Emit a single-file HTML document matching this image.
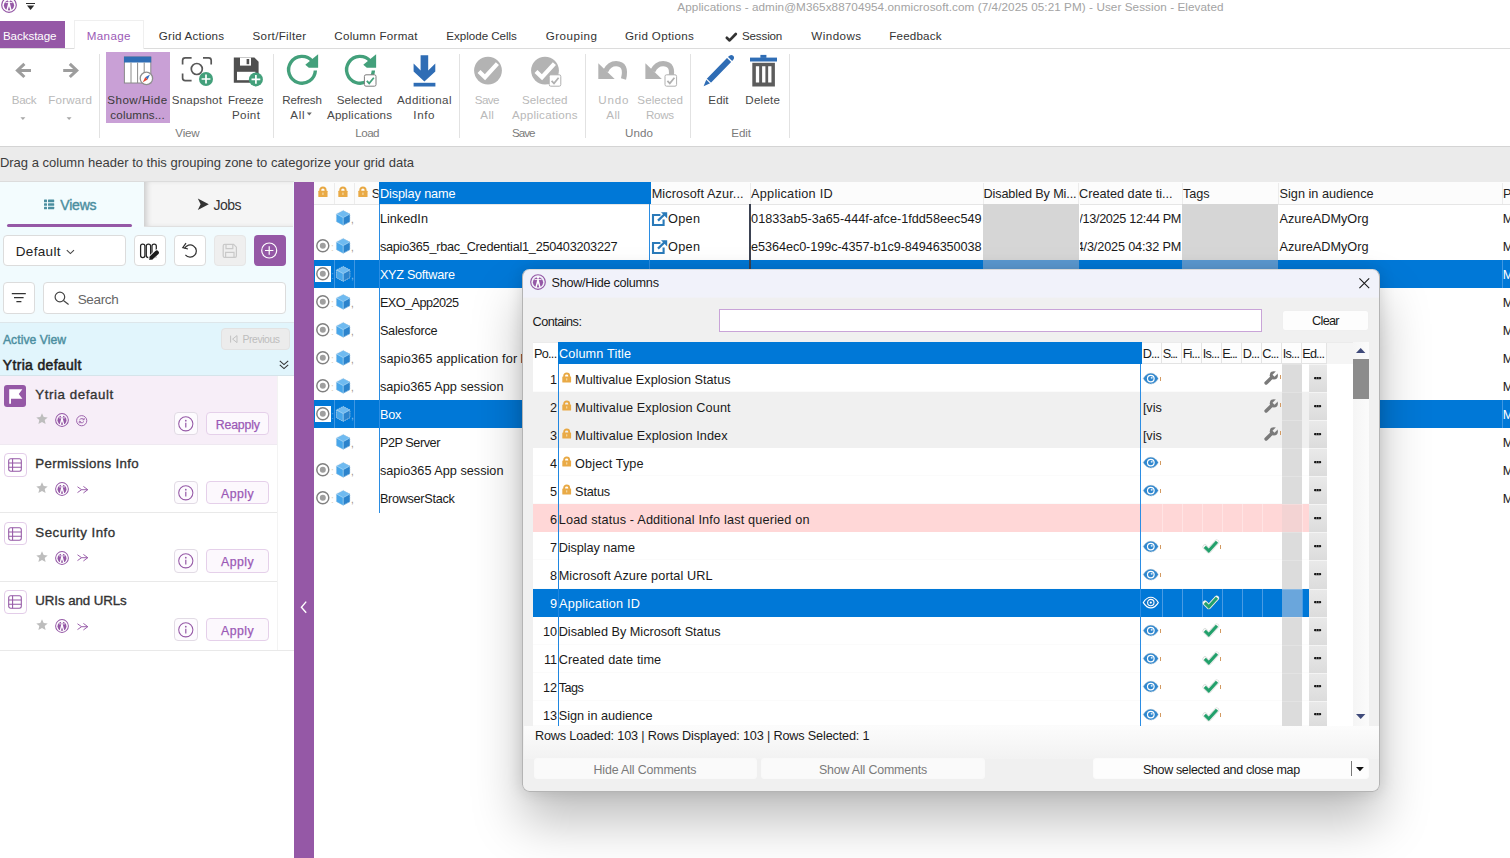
<!DOCTYPE html>
<html lang="en"><head><meta charset="utf-8"><title>sapio365 - Applications</title>
<style>

html,body{margin:0;padding:0;background:#fff;}
body{width:1510px;height:858px;overflow:hidden;font-family:'Liberation Sans',sans-serif;}
#app{position:relative;width:1510px;height:858px;overflow:hidden;background:#fff;}
#app div,#app span.t,#app svg{position:absolute;box-sizing:border-box;}
#app header,#app nav,#app section,#app aside,#app main{position:absolute;left:0;top:0;width:1510px;height:858px;display:block;}
span.t{white-space:pre;line-height:1;}
svg{overflow:visible;}

</style></head>
<body>
<div id="app">
<header id="titlebar">
<span class="t" style="top:1.00px;font-size:11.7px;color:#a3a3a3;letter-spacing:0.078px;left:677.36px;">Applications - admin@M365x88704954.onmicrosoft.com (7/4/2025 05:21 PM) - User Session - Elevated</span>
<svg style="left:0.6px;top:-3.2px" width="16" height="16" viewBox="0 0 32 32"><circle cx="16" cy="16" r="14.6" fill="none" stroke="#9558A6" stroke-width="2.3"/><circle cx="16" cy="16.6" r="10.2" fill="#9558A6"/><circle cx="16" cy="7.2" r="2.4" fill="#fff"/><rect x="9" y="10.4" width="14" height="1.7" fill="#fff"/><path d="M14.9 10 H17.1 L21.6 27.6 H18.9 L16 18.6 L13.1 27.6 H10.4 Z" fill="#fff"/></svg>
<svg style="left:26px;top:3px" width="10" height="8" viewBox="0 0 10 8"><rect x="0" y="0" width="9" height="1" fill="#2c2c2c"/><path d="M1 2.6 H8.2 L4.6 6.9 Z" fill="#2c2c2c"/></svg>
</header>
<nav id="ribbon-tabs">
<div style="left:0px;top:48px;width:1510px;height:1px;background:#dcdcdc;"></div>
<div style="left:0px;top:21px;width:65px;height:26.5px;background:#9558A6;"></div>
<div style="left:74px;top:20px;width:69.5px;height:29px;background:#fff;border:1px solid #efefef;border-bottom:none;"></div>
<span class="t" style="top:30.00px;font-size:11.6px;color:#fff;letter-spacing:-0.073px;left:2.96px;">Backstage</span>
<span class="t" style="top:30.00px;font-size:11.6px;color:#9b59b6;letter-spacing:0.371px;left:86.76px;">Manage</span>
<span class="t" style="top:30.00px;font-size:11.6px;color:#333;letter-spacing:0.259px;left:158.76px;">Grid Actions</span>
<span class="t" style="top:30.00px;font-size:11.6px;color:#333;letter-spacing:0.331px;left:252.56px;">Sort/Filter</span>
<span class="t" style="top:30.00px;font-size:11.6px;color:#333;letter-spacing:0.272px;left:334.36px;">Column Format</span>
<span class="t" style="top:30.00px;font-size:11.6px;color:#333;letter-spacing:-0.028px;left:446.36px;">Explode Cells</span>
<span class="t" style="top:30.00px;font-size:11.6px;color:#333;letter-spacing:0.494px;left:545.76px;">Grouping</span>
<span class="t" style="top:30.00px;font-size:11.6px;color:#333;letter-spacing:0.351px;left:624.96px;">Grid Options</span>
<span class="t" style="top:30.00px;font-size:11.6px;color:#333;letter-spacing:-0.148px;left:741.96px;">Session</span>
<span class="t" style="top:30.00px;font-size:11.6px;color:#333;letter-spacing:0.452px;left:811.36px;">Windows</span>
<span class="t" style="top:30.00px;font-size:11.6px;color:#333;letter-spacing:0.177px;left:889.36px;">Feedback</span>
<svg style="left:725px;top:32px" width="13" height="11" viewBox="0 0 13 11"><path d="M1.8 5.8 L4.6 8.4 L10.8 2" fill="none" stroke="#333" stroke-width="2.7" stroke-linecap="round" stroke-linejoin="round"/></svg>
</nav>
<section id="ribbon">
<div style="left:0px;top:145.5px;width:1510px;height:1px;background:#d4d4d4;"></div>
<div style="left:99px;top:54px;width:1px;height:84px;background:#e2e2e2;"></div>
<div style="left:273px;top:54px;width:1px;height:84px;background:#e2e2e2;"></div>
<div style="left:458.5px;top:54px;width:1px;height:84px;background:#e2e2e2;"></div>
<div style="left:584.5px;top:54px;width:1px;height:84px;background:#e2e2e2;"></div>
<div style="left:690px;top:54px;width:1px;height:84px;background:#e2e2e2;"></div>
<div style="left:789px;top:54px;width:1px;height:84px;background:#e2e2e2;"></div>
<div style="left:105.6px;top:52.4px;width:64px;height:70.4px;background:#c9a0d6;"></div>
<span class="t" style="top:94.00px;font-size:11.6px;color:#b9b9b9;letter-spacing:-0.340px;left:11.76px;">Back</span>
<span class="t" style="top:94.00px;font-size:11.6px;color:#b9b9b9;letter-spacing:0.171px;left:48.36px;">Forward</span>
<span class="t" style="top:94.00px;font-size:11.6px;color:#3a3a3a;letter-spacing:0.460px;left:107.36px;">Show/Hide</span>
<span class="t" style="top:109.00px;font-size:11.6px;color:#3a3a3a;letter-spacing:0.168px;left:110.36px;">columns...</span>
<span class="t" style="top:94.00px;font-size:11.6px;color:#484848;letter-spacing:0.166px;left:171.76px;">Snapshot</span>
<span class="t" style="top:94.00px;font-size:11.6px;color:#484848;letter-spacing:-0.107px;left:227.96px;">Freeze</span>
<span class="t" style="top:109.00px;font-size:11.6px;color:#484848;letter-spacing:0.381px;left:231.96px;">Point</span>
<span class="t" style="top:127.00px;font-size:11.6px;color:#7a7a7a;letter-spacing:-0.254px;left:175.36px;">View</span>
<span class="t" style="top:94.00px;font-size:11.6px;color:#484848;letter-spacing:-0.175px;left:282.36px;">Refresh</span>
<span class="t" style="top:109.00px;font-size:11.6px;color:#484848;letter-spacing:0.635px;left:290.36px;">All</span>
<span class="t" style="top:94.00px;font-size:11.6px;color:#484848;letter-spacing:0.034px;left:336.76px;">Selected</span>
<span class="t" style="top:109.00px;font-size:11.6px;color:#484848;letter-spacing:0.240px;left:326.96px;">Applications</span>
<span class="t" style="top:94.00px;font-size:11.6px;color:#484848;letter-spacing:0.404px;left:396.96px;">Additional</span>
<span class="t" style="top:109.00px;font-size:11.6px;color:#484848;letter-spacing:0.605px;left:413.36px;">Info</span>
<span class="t" style="top:127.00px;font-size:11.6px;color:#7a7a7a;letter-spacing:-0.546px;left:355.36px;">Load</span>
<span class="t" style="top:94.00px;font-size:11.6px;color:#b9b9b9;letter-spacing:-0.559px;left:474.76px;">Save</span>
<span class="t" style="top:109.00px;font-size:11.6px;color:#b9b9b9;letter-spacing:0.335px;left:480.36px;">All</span>
<span class="t" style="top:94.00px;font-size:11.6px;color:#b9b9b9;letter-spacing:0.062px;left:521.96px;">Selected</span>
<span class="t" style="top:109.00px;font-size:11.6px;color:#b9b9b9;letter-spacing:0.277px;left:511.96px;">Applications</span>
<span class="t" style="top:127.00px;font-size:11.6px;color:#7a7a7a;letter-spacing:-0.959px;left:511.96px;">Save</span>
<span class="t" style="top:94.00px;font-size:11.6px;color:#b9b9b9;letter-spacing:0.814px;left:598.36px;">Undo</span>
<span class="t" style="top:109.00px;font-size:11.6px;color:#b9b9b9;letter-spacing:0.335px;left:606.36px;">All</span>
<span class="t" style="top:94.00px;font-size:11.6px;color:#b9b9b9;letter-spacing:0.062px;left:637.36px;">Selected</span>
<span class="t" style="top:109.00px;font-size:11.6px;color:#b9b9b9;letter-spacing:-0.280px;left:645.96px;">Rows</span>
<span class="t" style="top:127.00px;font-size:11.6px;color:#7a7a7a;letter-spacing:0.080px;left:624.96px;">Undo</span>
<span class="t" style="top:94.00px;font-size:11.6px;color:#484848;letter-spacing:0.059px;left:708.36px;">Edit</span>
<span class="t" style="top:94.00px;font-size:11.6px;color:#484848;letter-spacing:0.209px;left:745.36px;">Delete</span>
<span class="t" style="top:127.00px;font-size:11.6px;color:#7a7a7a;letter-spacing:-0.141px;left:731.36px;">Edit</span>
<svg style="left:0;top:0" width="800" height="146" viewBox="0 0 800 146"><path d="M31 70.4 H18.6 M24.4 63.8 L17.4 70.4 L24.4 77" fill="none" stroke="#9d9d9d" stroke-width="3"/><path d="M63.2 70.4 H75.6 M69.8 63.8 L76.8 70.4 L69.8 77" fill="none" stroke="#9d9d9d" stroke-width="3"/><path d="M20.4 117.2 h5 l-2.5 2.8z M66.6 117.2 h5 l-2.5 2.8z" fill="#a8a8a8"/><path d="M306.8 112.6 h5 l-2.5 2.9z" fill="#666"/><rect x="124.4" y="57" width="26.4" height="26" fill="#fff" stroke="#8a8a8a" stroke-width="1"/><rect x="124" y="56.6" width="27.2" height="5.9" fill="#2f6db5"/><path d="M131 62.5 V83 M137.6 62.5 V83 M144.2 62.5 V83" stroke="#8a8a8a" stroke-width="1" fill="none"/><circle cx="146.4" cy="78.4" r="6.2" fill="#fff" stroke="#8f8f8f" stroke-width="1.3"/><path d="M150 74.6 L147.6 79.6 L145.2 77.2 Z" fill="#3b6fc0"/><path d="M142.8 82.2 L145.2 77.2 L147.6 79.6 Z" fill="#e0452e"/><path d="M182.6 64.4 V60.4 Q182.6 57.8 185.2 57.8 H191.6 M203 57.8 H208.6 Q211.2 57.8 211.2 60.4 V64.4 M182.6 73.6 V78 Q182.6 80.6 185.2 80.6 H191.6" fill="none" stroke="#585858" stroke-width="1.7"/><circle cx="196.8" cy="69" r="5.5" fill="none" stroke="#585858" stroke-width="1.7"/><circle cx="206" cy="79" r="7" fill="#43a07b"/><path d="M201.6 79 H210.4 M206 74.6 V83.4" stroke="#fff" stroke-width="1.7" fill="none"/><path d="M233.8 57.6 H254.4 L258.6 61.8 V82.8 H233.8 Z" fill="#4f4f4f"/><rect x="240" y="57.6" width="11" height="8" fill="#fff"/><rect x="246.6" y="59" width="2.6" height="5.2" fill="#4f4f4f"/><rect x="237" y="71.8" width="18.4" height="8.4" fill="#fff"/><circle cx="255.9" cy="79.4" r="7" fill="#43a07b"/><path d="M251.5 79.4 H260.3 M255.9 75.0 V83.80000000000001" stroke="#fff" stroke-width="1.7" fill="none"/><path d="M312.26 61.19 A13.4 13.4 0 1 0 315.38 70.50" fill="none" stroke="#43a07b" stroke-width="3.4"/><path d="M318.10 54.20 V67.80 H308.80 L305.30 64.70 Z" fill="#43a07b"/><path d="M370.26 61.19 A13.4 13.4 0 1 0 373.38 70.50" fill="none" stroke="#43a07b" stroke-width="3.4"/><path d="M376.10 54.20 V67.80 H366.80 L363.30 64.70 Z" fill="#43a07b"/><rect x="364.4" y="74.8" width="11.6" height="11.4" rx="1.6" fill="#fff" stroke="#7d7d7d" stroke-width="1"/><path d="M366.79999999999995 80.8 L369.2 83.39999999999999 L373.79999999999995 77.8" fill="none" stroke="#43a07b" stroke-width="1.7"/><path d="M420.6 55.2 H428.2 V70.6 L435.3 63.6 V71.6 L424.4 81.4 L413.6 71.6 V63.6 L420.6 70.6 Z" fill="#2f6db5"/><rect x="413.6" y="82.8" width="21.8" height="3.7" fill="#2f6db5"/><circle cx="488" cy="70.6" r="13.9" fill="#b3b3b3"/><path d="M479 71.4 L485 77.2 L497.4 63.6" fill="none" stroke="#fff" stroke-width="4.2"/><circle cx="545" cy="70.6" r="13.9" fill="#b3b3b3"/><path d="M536 71.4 L542 77.2 L554.4 63.6" fill="none" stroke="#fff" stroke-width="4.2"/><rect x="549.2" y="74.8" width="11.6" height="11.4" rx="1.6" fill="#fff" stroke="#b0b0b0" stroke-width="1"/><path d="M551.6 80.8 L554.0 83.39999999999999 L558.6 77.8" fill="none" stroke="#b0b0b0" stroke-width="1.7"/><path d="M623.5 79.0 Q627.3 63.800000000000004 616.0999999999999 63.6 Q609.3 63.6 605.6999999999999 71.0" fill="none" stroke="#b3b3b3" stroke-width="5.2"/><path d="M598.3 63.2 V79.0 H614.6999999999999 Z" fill="#b3b3b3"/><path d="M670.6 79.0 Q674.4 63.800000000000004 663.1999999999999 63.6 Q656.4 63.6 652.8 71.0" fill="none" stroke="#b3b3b3" stroke-width="5.2"/><path d="M645.4 63.2 V79.0 H661.8 Z" fill="#b3b3b3"/><rect x="665" y="74.8" width="11.6" height="11.4" rx="1.6" fill="#fff" stroke="#b0b0b0" stroke-width="1"/><path d="M667.4 80.8 L669.8 83.39999999999999 L674.4 77.8" fill="none" stroke="#b0b0b0" stroke-width="1.7"/><g transform="translate(703.6 86.2) rotate(-45.8)"><path d="M0 0 L7.2 -2.9 H38.6 Q42.4 -2.9 42.4 0 Q42.4 2.9 38.6 2.9 H7.2 Z" fill="#2f6db5"/><rect x="6.4" y="-3.6" width="1.3" height="7.2" fill="#fff"/><rect x="36.6" y="-3.6" width="1.4" height="7.2" fill="#fff"/></g><rect x="750" y="57.6" width="27" height="3.9" fill="#2f6db5"/><rect x="760.4" y="54.9" width="6" height="3" fill="#2f6db5"/><rect x="752.3" y="62.8" width="22.6" height="23.7" fill="#5c5c5c"/><path d="M757.5 66.2 V82.4 M763.75 66.2 V82.4 M769.8 66.2 V82.4" stroke="#fff" stroke-width="3.3" fill="none"/></svg>
</section>
<section id="grouping-zone">
<div style="left:0px;top:146.5px;width:1510px;height:35.1px;background:#ebebeb;"></div>
<span class="t" style="top:156.00px;font-size:13px;color:#3c3c3c;left:-0.11px;">Drag a column header to this grouping zone to categorize your grid data</span>
</section>
<aside id="views-panel">
<div style="left:0px;top:181.5px;width:293.5px;height:676.5px;background:#f1fbfe;"></div>
<div style="left:0px;top:322px;width:293.5px;height:536px;background:#fff;"></div>
<div style="left:143.8px;top:181.5px;width:149.7px;height:45.1px;background:#f5f5f5;border-bottom:1px solid #e0e0e0;box-shadow:inset 5px 0 6px -3px rgba(0,0,0,.2);"></div>
<div style="left:0px;top:181.5px;width:143.8px;height:45.1px;background:#f3fcfe;border-top-right-radius:3px;"></div>
<div style="left:7px;top:223.7px;width:124.6px;height:3.3px;background:#9558A6;border-radius:2px;"></div>
<div style="left:0px;top:181px;width:293.5px;height:1px;background:#dcdcdc;"></div>
<span class="t" style="top:198.00px;font-size:14px;color:#4B8EA0;letter-spacing:-0.173px;-webkit-text-stroke:0.4px #4B8EA0;left:60.23px;">Views</span>
<span class="t" style="top:198.00px;font-size:14px;color:#333;letter-spacing:-0.559px;left:213.53px;">Jobs</span>
<div style="left:3.3px;top:234.6px;width:122.4px;height:31.1px;background:#fff;border:1px solid #dcdcdc;border-radius:4px;"></div>
<span class="t" style="top:245.00px;font-size:13.5px;color:#222;letter-spacing:0.361px;left:15.66px;">Default</span>
<div style="left:133.8px;top:234.6px;width:31.8px;height:31.1px;background:#fff;border:1px solid #dcdcdc;border-radius:4px;"></div>
<div style="left:173.8px;top:234.6px;width:31.8px;height:31.1px;background:#fff;border:1px solid #dcdcdc;border-radius:4px;"></div>
<div style="left:213.8px;top:234.6px;width:31.8px;height:31.1px;background:#efefef;border:1px solid #e6e6e6;border-radius:4px;"></div>
<div style="left:253.7px;top:234.6px;width:31.9px;height:31.1px;background:#9558A6;border-radius:4px;"></div>
<div style="left:3.2px;top:282.4px;width:31.6px;height:31.4px;background:#fff;border:1px solid #dcdcdc;border-radius:4px;"></div>
<div style="left:42.8px;top:282.4px;width:243px;height:31.4px;background:#fff;border:1px solid #dcdcdc;border-radius:4px;"></div>
<span class="t" style="top:293.00px;font-size:13.5px;color:#666;letter-spacing:-0.326px;left:77.66px;">Search</span>
<div style="left:0px;top:322px;width:293.5px;height:53.6px;background:#e1f5fc;border-top:1px solid #dde6ea;border-bottom:1px solid #d5e4ea;"></div>
<span class="t" style="top:334.00px;font-size:12.2px;color:#4B8EA0;letter-spacing:0.044px;-webkit-text-stroke:0.4px #4B8EA0;left:2.93px;">Active View</span>
<div style="left:221.2px;top:327.6px;width:68.4px;height:22.8px;background:#ececec;border:1px solid #e2e2e2;border-radius:4px;"></div>
<span class="t" style="top:335.00px;font-size:10.4px;color:#bdbdbd;letter-spacing:-0.400px;left:242.43px;">Previous</span>
<span class="t" style="top:358.00px;font-size:14px;color:#1e1e1e;letter-spacing:0.323px;-webkit-text-stroke:0.55px #1e1e1e;left:2.83px;">Ytria default</span>
<div style="left:277px;top:375.6px;width:1px;height:274.6px;background:#f3f3f3;"></div>
<div style="left:0px;top:375.5px;width:277px;height:68.65px;background:#f7eef8;"></div>
<div style="left:0px;top:443.65px;width:277px;height:1px;background:#efe9f1;"></div>
<div style="left:4px;top:384.5px;width:22.4px;height:22.2px;background:#9558A6;border-radius:3px;"></div>
<svg style="left:4px;top:384.5px" width="22.4" height="22.2" viewBox="0 0 22.4 22.2"><path d="M5.2 4.2 H18.4 L14.8 9 L18.4 13.8 H7 V18.8 H5.2 Z" fill="#fff"/></svg>
<span class="t" style="top:388.00px;font-size:13.3px;color:#333;letter-spacing:0.572px;-webkit-text-stroke:0.35px #333;left:35.37px;">Ytria default</span>
<svg style="left:36.4px;top:413.3px" width="12" height="11.4" viewBox="0 0 12 11.4"><path d="M6 .3 L7.7 4 L11.7 4.4 L8.7 7.1 L9.6 11 L6 9 L2.4 11 L3.3 7.1 L.3 4.4 L4.3 4 Z" fill="#bdbdbd"/></svg>
<svg style="left:55px;top:413.2px" width="14" height="14" viewBox="0 0 32 32"><circle cx="16" cy="16" r="14.6" fill="none" stroke="#9558A6" stroke-width="2.3"/><circle cx="16" cy="16.6" r="10.2" fill="#9558A6"/><circle cx="16" cy="7.2" r="2.4" fill="#fff"/><rect x="9" y="10.4" width="14" height="1.7" fill="#fff"/><path d="M14.9 10 H17.1 L21.6 27.6 H18.9 L16 18.6 L13.1 27.6 H10.4 Z" fill="#fff"/></svg>
<svg style="left:76.4px;top:414.7px" width="11.4" height="11.4" viewBox="0 0 11.4 11.4"><circle cx="5.7" cy="5.7" r="5.1" fill="none" stroke="#9558A6" stroke-width=".9"/><path d="M3.4 5 Q4.6 3.2 6.6 3.6 L7.8 4.4 M8 6.4 Q6.8 8.2 4.8 7.8 L3.6 7" fill="none" stroke="#9558A6" stroke-width=".9"/><path d="M8.2 3 V4.8 H6.4 M3.2 8.4 V6.6 H5" fill="none" stroke="#9558A6" stroke-width=".8"/></svg>
<div style="left:173.6px;top:412.1px;width:24px;height:23.2px;background:#fdfbfe;border:1px solid #e2dbe5;border-radius:4px;"></div>
<svg style="left:177.6px;top:415.9px" width="15.6" height="15.6" viewBox="0 0 15.6 15.6"><circle cx="7.8" cy="7.8" r="7.1" fill="none" stroke="#9558A6" stroke-width="1.05"/><circle cx="7.8" cy="4.7" r=".85" fill="#9558A6"/><path d="M7.8 6.8 V11.4" stroke="#9558A6" stroke-width="1.2"/></svg>
<div style="left:205.8px;top:412.1px;width:63.6px;height:23.2px;background:#fcf8fd;border:1px solid #e5d0ea;border-radius:4px;"></div>
<span class="t" style="top:419.00px;font-size:12.3px;color:#9b59b6;letter-spacing:-0.149px;-webkit-text-stroke:0.25px #9b59b6;left:215.72px;">Reapply</span>
<div style="left:0px;top:512.3px;width:277px;height:1px;background:#e9e9e9;"></div>
<div style="left:3.6px;top:453.05px;width:23.4px;height:23.6px;background:#fff;border:1px solid #e3cde9;border-radius:4px;"></div>
<svg style="left:8.1px;top:457.95px" width="14" height="14" viewBox="0 0 14 14"><rect x=".7" y=".7" width="12.6" height="12.6" rx="2" fill="none" stroke="#9558A6" stroke-width="1.05"/><path d="M.7 5 H13.3 M.7 9.2 H13.3 M4.6 .7 V13.3" stroke="#9558A6" stroke-width="1.05" fill="none"/></svg>
<span class="t" style="top:457.00px;font-size:13.3px;color:#333;letter-spacing:0.329px;-webkit-text-stroke:0.35px #333;left:35.37px;">Permissions Info</span>
<svg style="left:36.4px;top:481.95px" width="12" height="11.4" viewBox="0 0 12 11.4"><path d="M6 .3 L7.7 4 L11.7 4.4 L8.7 7.1 L9.6 11 L6 9 L2.4 11 L3.3 7.1 L.3 4.4 L4.3 4 Z" fill="#bdbdbd"/></svg>
<svg style="left:55px;top:481.85px" width="14" height="14" viewBox="0 0 32 32"><circle cx="16" cy="16" r="14.6" fill="none" stroke="#9558A6" stroke-width="2.3"/><circle cx="16" cy="16.6" r="10.2" fill="#9558A6"/><circle cx="16" cy="7.2" r="2.4" fill="#fff"/><rect x="9" y="10.4" width="14" height="1.7" fill="#fff"/><path d="M14.9 10 H17.1 L21.6 27.6 H18.9 L16 18.6 L13.1 27.6 H10.4 Z" fill="#fff"/></svg>
<svg style="left:77px;top:485.75px" width="11.6" height="7.4" viewBox="0 0 11.6 7.4"><path d="M.5 .8 L4.6 3.7 L.5 6.6 M4.6 3.7 H10.8 M6.4 .4 L10.8 3.7 L6.4 7" fill="none" stroke="#9558A6" stroke-width=".95"/></svg>
<div style="left:173.6px;top:480.75px;width:24px;height:23.2px;background:#fdfbfe;border:1px solid #e2dbe5;border-radius:4px;"></div>
<svg style="left:177.6px;top:484.55px" width="15.6" height="15.6" viewBox="0 0 15.6 15.6"><circle cx="7.8" cy="7.8" r="7.1" fill="none" stroke="#9558A6" stroke-width="1.05"/><circle cx="7.8" cy="4.7" r=".85" fill="#9558A6"/><path d="M7.8 6.8 V11.4" stroke="#9558A6" stroke-width="1.2"/></svg>
<div style="left:205.8px;top:480.75px;width:63.6px;height:23.2px;background:#fcf8fd;border:1px solid #e5d0ea;border-radius:4px;"></div>
<span class="t" style="top:488.00px;font-size:12.3px;color:#9b59b6;letter-spacing:0.416px;-webkit-text-stroke:0.25px #9b59b6;left:221.12px;">Apply</span>
<div style="left:0px;top:580.95px;width:277px;height:1px;background:#e9e9e9;"></div>
<div style="left:3.6px;top:521.7px;width:23.4px;height:23.6px;background:#fff;border:1px solid #e3cde9;border-radius:4px;"></div>
<svg style="left:8.1px;top:526.6px" width="14" height="14" viewBox="0 0 14 14"><rect x=".7" y=".7" width="12.6" height="12.6" rx="2" fill="none" stroke="#9558A6" stroke-width="1.05"/><path d="M.7 5 H13.3 M.7 9.2 H13.3 M4.6 .7 V13.3" stroke="#9558A6" stroke-width="1.05" fill="none"/></svg>
<span class="t" style="top:526.00px;font-size:13.3px;color:#333;letter-spacing:0.494px;-webkit-text-stroke:0.35px #333;left:35.37px;">Security Info</span>
<svg style="left:36.4px;top:550.6px" width="12" height="11.4" viewBox="0 0 12 11.4"><path d="M6 .3 L7.7 4 L11.7 4.4 L8.7 7.1 L9.6 11 L6 9 L2.4 11 L3.3 7.1 L.3 4.4 L4.3 4 Z" fill="#bdbdbd"/></svg>
<svg style="left:55px;top:550.5px" width="14" height="14" viewBox="0 0 32 32"><circle cx="16" cy="16" r="14.6" fill="none" stroke="#9558A6" stroke-width="2.3"/><circle cx="16" cy="16.6" r="10.2" fill="#9558A6"/><circle cx="16" cy="7.2" r="2.4" fill="#fff"/><rect x="9" y="10.4" width="14" height="1.7" fill="#fff"/><path d="M14.9 10 H17.1 L21.6 27.6 H18.9 L16 18.6 L13.1 27.6 H10.4 Z" fill="#fff"/></svg>
<svg style="left:77px;top:554.4px" width="11.6" height="7.4" viewBox="0 0 11.6 7.4"><path d="M.5 .8 L4.6 3.7 L.5 6.6 M4.6 3.7 H10.8 M6.4 .4 L10.8 3.7 L6.4 7" fill="none" stroke="#9558A6" stroke-width=".95"/></svg>
<div style="left:173.6px;top:549.4px;width:24px;height:23.2px;background:#fdfbfe;border:1px solid #e2dbe5;border-radius:4px;"></div>
<svg style="left:177.6px;top:553.2px" width="15.6" height="15.6" viewBox="0 0 15.6 15.6"><circle cx="7.8" cy="7.8" r="7.1" fill="none" stroke="#9558A6" stroke-width="1.05"/><circle cx="7.8" cy="4.7" r=".85" fill="#9558A6"/><path d="M7.8 6.8 V11.4" stroke="#9558A6" stroke-width="1.2"/></svg>
<div style="left:205.8px;top:549.4px;width:63.6px;height:23.2px;background:#fcf8fd;border:1px solid #e5d0ea;border-radius:4px;"></div>
<span class="t" style="top:556.00px;font-size:12.3px;color:#9b59b6;letter-spacing:0.416px;-webkit-text-stroke:0.25px #9b59b6;left:221.12px;">Apply</span>
<div style="left:0px;top:649.6px;width:293.5px;height:1px;background:#e9e9e9;"></div>
<div style="left:3.6px;top:590.35px;width:23.4px;height:23.6px;background:#fff;border:1px solid #e3cde9;border-radius:4px;"></div>
<svg style="left:8.1px;top:595.25px" width="14" height="14" viewBox="0 0 14 14"><rect x=".7" y=".7" width="12.6" height="12.6" rx="2" fill="none" stroke="#9558A6" stroke-width="1.05"/><path d="M.7 5 H13.3 M.7 9.2 H13.3 M4.6 .7 V13.3" stroke="#9558A6" stroke-width="1.05" fill="none"/></svg>
<span class="t" style="top:594.00px;font-size:13.3px;color:#333;letter-spacing:-0.095px;-webkit-text-stroke:0.35px #333;left:35.37px;">URIs and URLs</span>
<svg style="left:36.4px;top:619.25px" width="12" height="11.4" viewBox="0 0 12 11.4"><path d="M6 .3 L7.7 4 L11.7 4.4 L8.7 7.1 L9.6 11 L6 9 L2.4 11 L3.3 7.1 L.3 4.4 L4.3 4 Z" fill="#bdbdbd"/></svg>
<svg style="left:55px;top:619.15px" width="14" height="14" viewBox="0 0 32 32"><circle cx="16" cy="16" r="14.6" fill="none" stroke="#9558A6" stroke-width="2.3"/><circle cx="16" cy="16.6" r="10.2" fill="#9558A6"/><circle cx="16" cy="7.2" r="2.4" fill="#fff"/><rect x="9" y="10.4" width="14" height="1.7" fill="#fff"/><path d="M14.9 10 H17.1 L21.6 27.6 H18.9 L16 18.6 L13.1 27.6 H10.4 Z" fill="#fff"/></svg>
<svg style="left:77px;top:623.05px" width="11.6" height="7.4" viewBox="0 0 11.6 7.4"><path d="M.5 .8 L4.6 3.7 L.5 6.6 M4.6 3.7 H10.8 M6.4 .4 L10.8 3.7 L6.4 7" fill="none" stroke="#9558A6" stroke-width=".95"/></svg>
<div style="left:173.6px;top:618.05px;width:24px;height:23.2px;background:#fdfbfe;border:1px solid #e2dbe5;border-radius:4px;"></div>
<svg style="left:177.6px;top:621.85px" width="15.6" height="15.6" viewBox="0 0 15.6 15.6"><circle cx="7.8" cy="7.8" r="7.1" fill="none" stroke="#9558A6" stroke-width="1.05"/><circle cx="7.8" cy="4.7" r=".85" fill="#9558A6"/><path d="M7.8 6.8 V11.4" stroke="#9558A6" stroke-width="1.2"/></svg>
<div style="left:205.8px;top:618.05px;width:63.6px;height:23.2px;background:#fcf8fd;border:1px solid #e5d0ea;border-radius:4px;"></div>
<span class="t" style="top:625.00px;font-size:12.3px;color:#9b59b6;letter-spacing:0.416px;-webkit-text-stroke:0.25px #9b59b6;left:221.12px;">Apply</span>
<svg style="left:0;top:0" width="294" height="380" viewBox="0 0 294 380"><rect x="44" y="199.60" width="3" height="2.6" rx=".5" fill="#4B8EA0"/><rect x="48" y="199.60" width="6.2" height="2.6" rx=".5" fill="#4B8EA0"/><rect x="44" y="203.15" width="3" height="2.6" rx=".5" fill="#4B8EA0"/><rect x="48" y="203.15" width="6.2" height="2.6" rx=".5" fill="#4B8EA0"/><rect x="44" y="206.70" width="3" height="2.6" rx=".5" fill="#4B8EA0"/><rect x="48" y="206.70" width="6.2" height="2.6" rx=".5" fill="#4B8EA0"/><path d="M197.8 198.4 L208.8 204.2 L197.8 210 L200.6 204.2 Z" fill="#333"/><path d="M66.8 250.2 L70.4 253.6 L74 250.2" fill="none" stroke="#444" stroke-width="1.1"/><rect x="140.6" y="244" width="4.3" height="13.6" rx="2.1" fill="none" stroke="#222" stroke-width="1.25"/><rect x="146.3" y="244" width="4.3" height="13.6" rx="2.1" fill="none" stroke="#222" stroke-width="1.25"/><rect x="152.0" y="244" width="4.3" height="13.6" rx="2.1" fill="none" stroke="#222" stroke-width="1.25"/><path d="M151.4 257.6 L157 252.4" stroke="#fff" stroke-width="6" stroke-linecap="round"/><path d="M151.8 257.2 L156.8 252.6" stroke="#1c1c1c" stroke-width="4.2" stroke-linecap="round"/><path d="M149.2 260 L149.9 256.2 L153 259.2 Z" fill="#1c1c1c"/><path d="M184.6 248.6 A6.1 6.1 0 1 1 185.4 254.8" fill="none" stroke="#333" stroke-width="1.2"/><path d="M186 243.2 L182.8 247.6 L188 249" fill="none" stroke="#333" stroke-width="1.2"/><path d="M224.6 244.4 H233.6 L236.4 247.2 V256 Q236.4 257.4 235 257.4 H224.6 Q223.2 257.4 223.2 256 V245.8 Q223.2 244.4 224.6 244.4 Z" fill="none" stroke="#c9c9c9" stroke-width="1.2"/><path d="M226 244.6 V248.6 H232.8 V244.6 M225.6 257.2 V252.4 H234 V257.2" fill="none" stroke="#c9c9c9" stroke-width="1.2"/><circle cx="269.2" cy="250.5" r="7.5" fill="none" stroke="#fff" stroke-width="1.2"/><path d="M265 250.5 H273.4 M269.2 246.3 V254.7" stroke="#fff" stroke-width="1.2" fill="none"/><path d="M11.8 293.6 H25.8 M14 297.6 H23.6 M16.4 301.6 H21.4" stroke="#333" stroke-width="1.2" fill="none"/><circle cx="59.9" cy="297" r="4.8" fill="none" stroke="#444" stroke-width="1.2"/><path d="M63.4 300.6 L68.6 304.6" stroke="#444" stroke-width="1.2"/><path d="M230.6 335.6 V342.6 M237 335.6 L232.6 339.1 L237 342.6 Z" fill="none" stroke="#c2c2c2" stroke-width="1"/><path d="M279.8 360.8 L284 364.6 L288.2 360.8 M279.8 364.8 L284 368.6 L288.2 364.8" fill="none" stroke="#333" stroke-width="1.1"/></svg>
</aside>
<section id="splitter">
<div style="left:293.5px;top:181.6px;width:20.5px;height:676.4px;background:#9558A6;"></div>
<svg style="left:299.5px;top:600px" width="8" height="14" viewBox="0 0 8 14"><path d="M6.2 1.6 L1.4 7.2 L6.2 12.8" fill="none" stroke="#fff" stroke-width="1.4"/></svg>
</section>
<main id="grid">
<div style="left:314px;top:181.6px;width:1196px;height:676.4px;background:#fff;"></div>
<div style="left:314px;top:181.6px;width:1196px;height:23.1px;background:#fcfcfc;border-bottom:1px solid #e6e6e6;"></div>
<div style="left:334px;top:182.6px;width:1px;height:21px;background:#ececec;"></div>
<div style="left:354.4px;top:182.6px;width:1px;height:21px;background:#ececec;"></div>
<div style="left:750px;top:182.6px;width:1px;height:21px;background:#ececec;"></div>
<div style="left:983px;top:182.6px;width:1px;height:21px;background:#ececec;"></div>
<div style="left:1078px;top:182.6px;width:1px;height:21px;background:#ececec;"></div>
<div style="left:1182px;top:182.6px;width:1px;height:21px;background:#ececec;"></div>
<div style="left:1278.4px;top:182.6px;width:1px;height:21px;background:#ececec;"></div>
<div style="left:1502px;top:182.6px;width:1px;height:21px;background:#ececec;"></div>
<div style="left:379px;top:181.6px;width:271.6px;height:22.3px;background:#0078D7;"></div>
<svg style="left:317.8px;top:186px" width="9.87" height="11.13" viewBox="0 0 9.4 10.6"><path d="M2.2 5 V3.9 Q2.2 1.5 4.7 1.5 Q7.2 1.5 7.2 3.9 V5" fill="none" stroke="#e8a843" stroke-width="1.9"/><rect x=".3" y="4.6" width="8.8" height="5.8" rx=".5" fill="#e9aa46"/><rect x="4.1" y="6.3" width="1.2" height="2.2" fill="#f6d9a6"/></svg>
<svg style="left:337.8px;top:186px" width="9.87" height="11.13" viewBox="0 0 9.4 10.6"><path d="M2.2 5 V3.9 Q2.2 1.5 4.7 1.5 Q7.2 1.5 7.2 3.9 V5" fill="none" stroke="#e8a843" stroke-width="1.9"/><rect x=".3" y="4.6" width="8.8" height="5.8" rx=".5" fill="#e9aa46"/><rect x="4.1" y="6.3" width="1.2" height="2.2" fill="#f6d9a6"/></svg>
<svg style="left:357.8px;top:186px" width="9.87" height="11.13" viewBox="0 0 9.4 10.6"><path d="M2.2 5 V3.9 Q2.2 1.5 4.7 1.5 Q7.2 1.5 7.2 3.9 V5" fill="none" stroke="#e8a843" stroke-width="1.9"/><rect x=".3" y="4.6" width="8.8" height="5.8" rx=".5" fill="#e9aa46"/><rect x="4.1" y="6.3" width="1.2" height="2.2" fill="#f6d9a6"/></svg>
<span class="t" style="top:188.00px;font-size:12.7px;color:#222;left:371.70px;clip-path:inset(0 1.6px 0 0);">S</span>
<span class="t" style="top:188.00px;font-size:12.7px;color:#fff;letter-spacing:-0.110px;left:379.90px;">Display name</span>
<span class="t" style="top:188.00px;font-size:12.7px;color:#222;letter-spacing:0.101px;left:651.70px;">Microsoft Azur...</span>
<span class="t" style="top:188.00px;font-size:12.7px;color:#222;letter-spacing:0.245px;left:751.10px;">Application ID</span>
<span class="t" style="top:188.00px;font-size:12.7px;color:#222;letter-spacing:-0.132px;left:983.50px;">Disabled By Mi...</span>
<span class="t" style="top:188.00px;font-size:12.7px;color:#222;letter-spacing:-0.020px;left:1079.10px;">Created date ti...</span>
<span class="t" style="top:188.00px;font-size:12.7px;color:#222;letter-spacing:-0.047px;left:1182.90px;">Tags</span>
<span class="t" style="top:188.00px;font-size:12.7px;color:#222;letter-spacing:0.016px;left:1279.50px;">Sign in audience</span>
<span class="t" style="top:188.00px;font-size:12.7px;color:#222;left:1502.90px;">P</span>
<svg style="left:335.8px;top:210.1px" width="14.4" height="15.8" viewBox="0 0 14.4 15.8"><path d="M7.2 .4 L14 3.9 V11.7 L7.2 15.4 L.4 11.7 V3.9 Z" fill="#9fd0f3"/><path d="M7.2 .6 L13.8 4 L7.2 7.6 L.6 4 Z" fill="#6fbaf0"/><path d="M.5 4 L7.2 7.6 V15.3 L.5 11.7 Z" fill="#48a6ea"/><path d="M13.9 4 L7.2 7.6 V15.3 L13.9 11.7 Z" fill="#2c83cc"/><path d="M.6 4 L7.2 7.6 L13.8 4 M7.2 7.6 V15.2" fill="none" stroke="#a9d8f7" stroke-width=".7"/><path d="M7.2 .4 L14 3.9 V11.7 L7.2 15.4 L.4 11.7 V3.9 Z" fill="none" stroke="#b3cfe3" stroke-width=".7" stroke-dasharray="1.3 .9"/></svg>
<span class="t" style="top:215.00px;font-size:10px;color:#9a8f80;left:351.05px;">,</span>
<span class="t" style="top:213.00px;font-size:12.7px;color:#1a1a1a;letter-spacing:0.014px;left:379.90px;">LinkedIn</span>
<span class="t" style="top:213.00px;font-size:12.7px;color:#1a1a1a;left:1502.70px;">M</span>
<svg style="left:652px;top:211.7px" width="15.6" height="14" viewBox="0 0 15.6 14"><path d="M8.4 3 H1 V13 H11.6 V7.4" fill="none" stroke="#2a7ab9" stroke-width="2.1"/><path d="M6 8.6 L13.6 1.2" stroke="#2a7ab9" stroke-width="2.3"/><path d="M9 .2 H15.2 V6.4 Z" fill="#2a7ab9"/></svg>
<span class="t" style="top:213.00px;font-size:12.7px;color:#1a1a1a;letter-spacing:0.274px;left:668.10px;">Open</span>
<span class="t" style="top:213.00px;font-size:12.7px;color:#1a1a1a;letter-spacing:-0.006px;left:751.10px;">01833ab5-3a65-444f-afce-1fdd58eec549</span>
<span class="t" style="top:213.00px;font-size:12.7px;color:#1a1a1a;letter-spacing:-0.318px;right:328.95px;">1/13/2025 12:44 PM</span>
<span class="t" style="top:213.00px;font-size:12.7px;color:#1a1a1a;letter-spacing:0.021px;left:1279.50px;">AzureADMyOrg</span>
<div style="left:983px;top:204.1px;width:95.6px;height:28px;background:#d6d6d6;"></div>
<div style="left:1182.4px;top:204.1px;width:96px;height:28px;background:#d6d6d6;"></div>
<svg style="left:316.4px;top:239px" width="13.6" height="13.6" viewBox="0 0 13.6 13.6"><circle cx="6.8" cy="6.8" r="6" fill="#fff" stroke="#808080" stroke-width="1.45"/><circle cx="6.8" cy="6.8" r="3" fill="#9f9f9f"/></svg>
<span class="t" style="top:243.00px;font-size:10px;color:#d9cdbb;left:331.05px;">:</span>
<svg style="left:335.8px;top:238.1px" width="14.4" height="15.8" viewBox="0 0 14.4 15.8"><path d="M7.2 .4 L14 3.9 V11.7 L7.2 15.4 L.4 11.7 V3.9 Z" fill="#9fd0f3"/><path d="M7.2 .6 L13.8 4 L7.2 7.6 L.6 4 Z" fill="#6fbaf0"/><path d="M.5 4 L7.2 7.6 V15.3 L.5 11.7 Z" fill="#48a6ea"/><path d="M13.9 4 L7.2 7.6 V15.3 L13.9 11.7 Z" fill="#2c83cc"/><path d="M.6 4 L7.2 7.6 L13.8 4 M7.2 7.6 V15.2" fill="none" stroke="#a9d8f7" stroke-width=".7"/><path d="M7.2 .4 L14 3.9 V11.7 L7.2 15.4 L.4 11.7 V3.9 Z" fill="none" stroke="#b3cfe3" stroke-width=".7" stroke-dasharray="1.3 .9"/></svg>
<span class="t" style="top:243.00px;font-size:10px;color:#9a8f80;left:351.05px;">,</span>
<span class="t" style="top:241.00px;font-size:12.7px;color:#1a1a1a;letter-spacing:-0.250px;left:379.90px;">sapio365_rbac_Credential1_250403203227</span>
<span class="t" style="top:241.00px;font-size:12.7px;color:#1a1a1a;left:1502.70px;">M</span>
<svg style="left:652px;top:239.7px" width="15.6" height="14" viewBox="0 0 15.6 14"><path d="M8.4 3 H1 V13 H11.6 V7.4" fill="none" stroke="#2a7ab9" stroke-width="2.1"/><path d="M6 8.6 L13.6 1.2" stroke="#2a7ab9" stroke-width="2.3"/><path d="M9 .2 H15.2 V6.4 Z" fill="#2a7ab9"/></svg>
<span class="t" style="top:241.00px;font-size:12.7px;color:#1a1a1a;letter-spacing:0.274px;left:668.10px;">Open</span>
<span class="t" style="top:241.00px;font-size:12.7px;color:#1a1a1a;letter-spacing:-0.090px;left:751.10px;">e5364ec0-199c-4357-b1c9-84946350038</span>
<span class="t" style="top:241.00px;font-size:12.7px;color:#1a1a1a;letter-spacing:-0.159px;right:328.79px;">4/3/2025 04:32 PM</span>
<span class="t" style="top:241.00px;font-size:12.7px;color:#1a1a1a;letter-spacing:0.021px;left:1279.50px;">AzureADMyOrg</span>
<div style="left:983px;top:232.1px;width:95.6px;height:28px;background:#d6d6d6;"></div>
<div style="left:1182.4px;top:232.1px;width:96px;height:28px;background:#d6d6d6;"></div>
<div style="left:314px;top:260.1px;width:1196px;height:28px;background:#0078D7;"></div>
<div style="left:334px;top:260.1px;width:1px;height:28px;background:#3f97e2;"></div>
<div style="left:354.4px;top:260.1px;width:1px;height:28px;background:#3f97e2;"></div>
<div style="left:1502px;top:260.1px;width:1px;height:28px;background:#3f97e2;"></div>
<div style="left:315.2px;top:265.7px;width:16.2px;height:16.4px;background:#fff;"></div>
<svg style="left:316.4px;top:267px" width="13.6" height="13.6" viewBox="0 0 13.6 13.6"><circle cx="6.8" cy="6.8" r="6" fill="#fff" stroke="#808080" stroke-width="1.45"/><circle cx="6.8" cy="6.8" r="3" fill="#9f9f9f"/></svg>
<span class="t" style="top:271.00px;font-size:10px;color:#5aa4e6;left:331.05px;">:</span>
<svg style="left:335.8px;top:266.1px" width="14.4" height="15.8" viewBox="0 0 14.4 15.8"><path d="M7.2 .4 L14 3.9 V11.7 L7.2 15.4 L.4 11.7 V3.9 Z" fill="#9fd0f3"/><path d="M7.2 .6 L13.8 4 L7.2 7.6 L.6 4 Z" fill="#6fbaf0"/><path d="M.5 4 L7.2 7.6 V15.3 L.5 11.7 Z" fill="#48a6ea"/><path d="M13.9 4 L7.2 7.6 V15.3 L13.9 11.7 Z" fill="#2c83cc"/><path d="M.6 4 L7.2 7.6 L13.8 4 M7.2 7.6 V15.2" fill="none" stroke="#a9d8f7" stroke-width=".7"/><path d="M7.2 .4 L14 3.9 V11.7 L7.2 15.4 L.4 11.7 V3.9 Z" fill="none" stroke="#b3cfe3" stroke-width=".7" stroke-dasharray="1.3 .9"/></svg>
<span class="t" style="top:271.00px;font-size:10px;color:#8cc0ee;left:351.05px;">,</span>
<span class="t" style="top:269.00px;font-size:12.7px;color:#fff;letter-spacing:-0.292px;left:379.90px;">XYZ Software</span>
<span class="t" style="top:269.00px;font-size:12.7px;color:#fff;left:1502.70px;">M</span>
<div style="left:983px;top:260.1px;width:95.6px;height:28px;background:#5c9ad2;"></div>
<div style="left:1182.4px;top:260.1px;width:96px;height:28px;background:#5c9ad2;"></div>
<svg style="left:316.4px;top:295px" width="13.6" height="13.6" viewBox="0 0 13.6 13.6"><circle cx="6.8" cy="6.8" r="6" fill="#fff" stroke="#808080" stroke-width="1.45"/><circle cx="6.8" cy="6.8" r="3" fill="#9f9f9f"/></svg>
<span class="t" style="top:299.00px;font-size:10px;color:#d9cdbb;left:331.05px;">:</span>
<svg style="left:335.8px;top:294.1px" width="14.4" height="15.8" viewBox="0 0 14.4 15.8"><path d="M7.2 .4 L14 3.9 V11.7 L7.2 15.4 L.4 11.7 V3.9 Z" fill="#9fd0f3"/><path d="M7.2 .6 L13.8 4 L7.2 7.6 L.6 4 Z" fill="#6fbaf0"/><path d="M.5 4 L7.2 7.6 V15.3 L.5 11.7 Z" fill="#48a6ea"/><path d="M13.9 4 L7.2 7.6 V15.3 L13.9 11.7 Z" fill="#2c83cc"/><path d="M.6 4 L7.2 7.6 L13.8 4 M7.2 7.6 V15.2" fill="none" stroke="#a9d8f7" stroke-width=".7"/><path d="M7.2 .4 L14 3.9 V11.7 L7.2 15.4 L.4 11.7 V3.9 Z" fill="none" stroke="#b3cfe3" stroke-width=".7" stroke-dasharray="1.3 .9"/></svg>
<span class="t" style="top:299.00px;font-size:10px;color:#9a8f80;left:351.05px;">,</span>
<span class="t" style="top:297.00px;font-size:12.7px;color:#1a1a1a;letter-spacing:-0.539px;left:379.90px;">EXO_App2025</span>
<span class="t" style="top:297.00px;font-size:12.7px;color:#1a1a1a;left:1502.70px;">M</span>
<svg style="left:316.4px;top:323px" width="13.6" height="13.6" viewBox="0 0 13.6 13.6"><circle cx="6.8" cy="6.8" r="6" fill="#fff" stroke="#808080" stroke-width="1.45"/><circle cx="6.8" cy="6.8" r="3" fill="#9f9f9f"/></svg>
<span class="t" style="top:327.00px;font-size:10px;color:#d9cdbb;left:331.05px;">:</span>
<svg style="left:335.8px;top:322.1px" width="14.4" height="15.8" viewBox="0 0 14.4 15.8"><path d="M7.2 .4 L14 3.9 V11.7 L7.2 15.4 L.4 11.7 V3.9 Z" fill="#9fd0f3"/><path d="M7.2 .6 L13.8 4 L7.2 7.6 L.6 4 Z" fill="#6fbaf0"/><path d="M.5 4 L7.2 7.6 V15.3 L.5 11.7 Z" fill="#48a6ea"/><path d="M13.9 4 L7.2 7.6 V15.3 L13.9 11.7 Z" fill="#2c83cc"/><path d="M.6 4 L7.2 7.6 L13.8 4 M7.2 7.6 V15.2" fill="none" stroke="#a9d8f7" stroke-width=".7"/><path d="M7.2 .4 L14 3.9 V11.7 L7.2 15.4 L.4 11.7 V3.9 Z" fill="none" stroke="#b3cfe3" stroke-width=".7" stroke-dasharray="1.3 .9"/></svg>
<span class="t" style="top:327.00px;font-size:10px;color:#9a8f80;left:351.05px;">,</span>
<span class="t" style="top:325.00px;font-size:12.7px;color:#1a1a1a;letter-spacing:-0.254px;left:379.90px;">Salesforce</span>
<span class="t" style="top:325.00px;font-size:12.7px;color:#1a1a1a;left:1502.70px;">M</span>
<svg style="left:316.4px;top:351px" width="13.6" height="13.6" viewBox="0 0 13.6 13.6"><circle cx="6.8" cy="6.8" r="6" fill="#fff" stroke="#808080" stroke-width="1.45"/><circle cx="6.8" cy="6.8" r="3" fill="#9f9f9f"/></svg>
<span class="t" style="top:355.00px;font-size:10px;color:#d9cdbb;left:331.05px;">:</span>
<svg style="left:335.8px;top:350.1px" width="14.4" height="15.8" viewBox="0 0 14.4 15.8"><path d="M7.2 .4 L14 3.9 V11.7 L7.2 15.4 L.4 11.7 V3.9 Z" fill="#9fd0f3"/><path d="M7.2 .6 L13.8 4 L7.2 7.6 L.6 4 Z" fill="#6fbaf0"/><path d="M.5 4 L7.2 7.6 V15.3 L.5 11.7 Z" fill="#48a6ea"/><path d="M13.9 4 L7.2 7.6 V15.3 L13.9 11.7 Z" fill="#2c83cc"/><path d="M.6 4 L7.2 7.6 L13.8 4 M7.2 7.6 V15.2" fill="none" stroke="#a9d8f7" stroke-width=".7"/><path d="M7.2 .4 L14 3.9 V11.7 L7.2 15.4 L.4 11.7 V3.9 Z" fill="none" stroke="#b3cfe3" stroke-width=".7" stroke-dasharray="1.3 .9"/></svg>
<span class="t" style="top:355.00px;font-size:10px;color:#9a8f80;left:351.05px;">,</span>
<span class="t" style="top:353.00px;font-size:12.7px;color:#1a1a1a;letter-spacing:0.141px;left:379.90px;">sapio365 application for</span>
<span class="t" style="top:353.00px;font-size:12.7px;color:#1a1a1a;left:1502.70px;">M</span>
<span class="t" style="top:353.00px;font-size:12.7px;color:#1a1a1a;left:520.20px;">M</span>
<svg style="left:316.4px;top:379px" width="13.6" height="13.6" viewBox="0 0 13.6 13.6"><circle cx="6.8" cy="6.8" r="6" fill="#fff" stroke="#808080" stroke-width="1.45"/><circle cx="6.8" cy="6.8" r="3" fill="#9f9f9f"/></svg>
<span class="t" style="top:383.00px;font-size:10px;color:#d9cdbb;left:331.05px;">:</span>
<svg style="left:335.8px;top:378.1px" width="14.4" height="15.8" viewBox="0 0 14.4 15.8"><path d="M7.2 .4 L14 3.9 V11.7 L7.2 15.4 L.4 11.7 V3.9 Z" fill="#9fd0f3"/><path d="M7.2 .6 L13.8 4 L7.2 7.6 L.6 4 Z" fill="#6fbaf0"/><path d="M.5 4 L7.2 7.6 V15.3 L.5 11.7 Z" fill="#48a6ea"/><path d="M13.9 4 L7.2 7.6 V15.3 L13.9 11.7 Z" fill="#2c83cc"/><path d="M.6 4 L7.2 7.6 L13.8 4 M7.2 7.6 V15.2" fill="none" stroke="#a9d8f7" stroke-width=".7"/><path d="M7.2 .4 L14 3.9 V11.7 L7.2 15.4 L.4 11.7 V3.9 Z" fill="none" stroke="#b3cfe3" stroke-width=".7" stroke-dasharray="1.3 .9"/></svg>
<span class="t" style="top:383.00px;font-size:10px;color:#9a8f80;left:351.05px;">,</span>
<span class="t" style="top:381.00px;font-size:12.7px;color:#1a1a1a;letter-spacing:0.006px;left:379.90px;">sapio365 App session</span>
<span class="t" style="top:381.00px;font-size:12.7px;color:#1a1a1a;left:1502.70px;">M</span>
<div style="left:314px;top:400.1px;width:1196px;height:28px;background:#0078D7;"></div>
<div style="left:334px;top:400.1px;width:1px;height:28px;background:#3f97e2;"></div>
<div style="left:354.4px;top:400.1px;width:1px;height:28px;background:#3f97e2;"></div>
<div style="left:1502px;top:400.1px;width:1px;height:28px;background:#3f97e2;"></div>
<div style="left:315.2px;top:405.7px;width:16.2px;height:16.4px;background:#fff;"></div>
<svg style="left:316.4px;top:407px" width="13.6" height="13.6" viewBox="0 0 13.6 13.6"><circle cx="6.8" cy="6.8" r="6" fill="#fff" stroke="#808080" stroke-width="1.45"/><circle cx="6.8" cy="6.8" r="3" fill="#9f9f9f"/></svg>
<span class="t" style="top:411.00px;font-size:10px;color:#5aa4e6;left:331.05px;">:</span>
<svg style="left:335.8px;top:406.1px" width="14.4" height="15.8" viewBox="0 0 14.4 15.8"><path d="M7.2 .4 L14 3.9 V11.7 L7.2 15.4 L.4 11.7 V3.9 Z" fill="#9fd0f3"/><path d="M7.2 .6 L13.8 4 L7.2 7.6 L.6 4 Z" fill="#6fbaf0"/><path d="M.5 4 L7.2 7.6 V15.3 L.5 11.7 Z" fill="#48a6ea"/><path d="M13.9 4 L7.2 7.6 V15.3 L13.9 11.7 Z" fill="#2c83cc"/><path d="M.6 4 L7.2 7.6 L13.8 4 M7.2 7.6 V15.2" fill="none" stroke="#a9d8f7" stroke-width=".7"/><path d="M7.2 .4 L14 3.9 V11.7 L7.2 15.4 L.4 11.7 V3.9 Z" fill="none" stroke="#b3cfe3" stroke-width=".7" stroke-dasharray="1.3 .9"/></svg>
<span class="t" style="top:411.00px;font-size:10px;color:#8cc0ee;left:351.05px;">,</span>
<span class="t" style="top:409.00px;font-size:12.7px;color:#fff;letter-spacing:-0.153px;left:379.90px;">Box</span>
<span class="t" style="top:409.00px;font-size:12.7px;color:#fff;left:1502.70px;">M</span>
<svg style="left:335.8px;top:434.1px" width="14.4" height="15.8" viewBox="0 0 14.4 15.8"><path d="M7.2 .4 L14 3.9 V11.7 L7.2 15.4 L.4 11.7 V3.9 Z" fill="#9fd0f3"/><path d="M7.2 .6 L13.8 4 L7.2 7.6 L.6 4 Z" fill="#6fbaf0"/><path d="M.5 4 L7.2 7.6 V15.3 L.5 11.7 Z" fill="#48a6ea"/><path d="M13.9 4 L7.2 7.6 V15.3 L13.9 11.7 Z" fill="#2c83cc"/><path d="M.6 4 L7.2 7.6 L13.8 4 M7.2 7.6 V15.2" fill="none" stroke="#a9d8f7" stroke-width=".7"/><path d="M7.2 .4 L14 3.9 V11.7 L7.2 15.4 L.4 11.7 V3.9 Z" fill="none" stroke="#b3cfe3" stroke-width=".7" stroke-dasharray="1.3 .9"/></svg>
<span class="t" style="top:439.00px;font-size:10px;color:#9a8f80;left:351.05px;">,</span>
<span class="t" style="top:437.00px;font-size:12.7px;color:#1a1a1a;letter-spacing:-0.454px;left:379.90px;">P2P Server</span>
<span class="t" style="top:437.00px;font-size:12.7px;color:#1a1a1a;left:1502.70px;">M</span>
<svg style="left:316.4px;top:463px" width="13.6" height="13.6" viewBox="0 0 13.6 13.6"><circle cx="6.8" cy="6.8" r="6" fill="#fff" stroke="#808080" stroke-width="1.45"/><circle cx="6.8" cy="6.8" r="3" fill="#9f9f9f"/></svg>
<span class="t" style="top:467.00px;font-size:10px;color:#d9cdbb;left:331.05px;">:</span>
<svg style="left:335.8px;top:462.1px" width="14.4" height="15.8" viewBox="0 0 14.4 15.8"><path d="M7.2 .4 L14 3.9 V11.7 L7.2 15.4 L.4 11.7 V3.9 Z" fill="#9fd0f3"/><path d="M7.2 .6 L13.8 4 L7.2 7.6 L.6 4 Z" fill="#6fbaf0"/><path d="M.5 4 L7.2 7.6 V15.3 L.5 11.7 Z" fill="#48a6ea"/><path d="M13.9 4 L7.2 7.6 V15.3 L13.9 11.7 Z" fill="#2c83cc"/><path d="M.6 4 L7.2 7.6 L13.8 4 M7.2 7.6 V15.2" fill="none" stroke="#a9d8f7" stroke-width=".7"/><path d="M7.2 .4 L14 3.9 V11.7 L7.2 15.4 L.4 11.7 V3.9 Z" fill="none" stroke="#b3cfe3" stroke-width=".7" stroke-dasharray="1.3 .9"/></svg>
<span class="t" style="top:467.00px;font-size:10px;color:#9a8f80;left:351.05px;">,</span>
<span class="t" style="top:465.00px;font-size:12.7px;color:#1a1a1a;letter-spacing:0.006px;left:379.90px;">sapio365 App session</span>
<span class="t" style="top:465.00px;font-size:12.7px;color:#1a1a1a;left:1502.70px;">M</span>
<svg style="left:316.4px;top:491px" width="13.6" height="13.6" viewBox="0 0 13.6 13.6"><circle cx="6.8" cy="6.8" r="6" fill="#fff" stroke="#808080" stroke-width="1.45"/><circle cx="6.8" cy="6.8" r="3" fill="#9f9f9f"/></svg>
<span class="t" style="top:495.00px;font-size:10px;color:#d9cdbb;left:331.05px;">:</span>
<svg style="left:335.8px;top:490.1px" width="14.4" height="15.8" viewBox="0 0 14.4 15.8"><path d="M7.2 .4 L14 3.9 V11.7 L7.2 15.4 L.4 11.7 V3.9 Z" fill="#9fd0f3"/><path d="M7.2 .6 L13.8 4 L7.2 7.6 L.6 4 Z" fill="#6fbaf0"/><path d="M.5 4 L7.2 7.6 V15.3 L.5 11.7 Z" fill="#48a6ea"/><path d="M13.9 4 L7.2 7.6 V15.3 L13.9 11.7 Z" fill="#2c83cc"/><path d="M.6 4 L7.2 7.6 L13.8 4 M7.2 7.6 V15.2" fill="none" stroke="#a9d8f7" stroke-width=".7"/><path d="M7.2 .4 L14 3.9 V11.7 L7.2 15.4 L.4 11.7 V3.9 Z" fill="none" stroke="#b3cfe3" stroke-width=".7" stroke-dasharray="1.3 .9"/></svg>
<span class="t" style="top:495.00px;font-size:10px;color:#9a8f80;left:351.05px;">,</span>
<span class="t" style="top:493.00px;font-size:12.7px;color:#1a1a1a;letter-spacing:-0.309px;left:379.90px;">BrowserStack</span>
<span class="t" style="top:493.00px;font-size:12.7px;color:#1a1a1a;left:1502.70px;">M</span>
<div style="left:1078.6px;top:204.1px;width:1.2px;height:56px;background:#fff;"></div>
<div style="left:379px;top:203.6px;width:1px;height:309px;background:#2b8de3;"></div>
<div style="left:649.1px;top:203.6px;width:1.2px;height:309px;background:#2b8de3;"></div>
<div style="left:749.4px;top:203.6px;width:1.6px;height:309px;background:#3b4252;"></div>
</main>
<section id="dialog" role="dialog" aria-label="Show/Hide columns">
<div style="left:522px;top:268.8px;width:857.9px;height:523.2px;background:linear-gradient(#f1f2fa 0,#f1f2fa 27px,#f0f0f0 28.4px,#f0f0f0 100%);border:1px solid #b4b4b4;border-top-color:#d9d9d9;border-radius:7.5px;box-shadow:0 30px 50px rgba(0,0,0,.25),0 0 16px rgba(0,0,0,.13);"></div>
<svg style="left:530px;top:274px" width="16" height="16" viewBox="0 0 32 32"><circle cx="16" cy="16" r="14.6" fill="none" stroke="#9558A6" stroke-width="2.3"/><circle cx="16" cy="16.6" r="10.2" fill="#9558A6"/><circle cx="16" cy="7.2" r="2.4" fill="#fff"/><rect x="9" y="10.4" width="14" height="1.7" fill="#fff"/><path d="M14.9 10 H17.1 L21.6 27.6 H18.9 L16 18.6 L13.1 27.6 H10.4 Z" fill="#fff"/></svg>
<span class="t" style="top:277.00px;font-size:12.7px;color:#1a1a1a;letter-spacing:-0.291px;left:551.50px;">Show/Hide columns</span>
<svg style="left:1359px;top:277.7px" width="10.6" height="10.6" viewBox="0 0 10.6 10.6"><path d="M.4 .4 L10.2 10.2 M10.2 .4 L.4 10.2" stroke="#1a1a1a" stroke-width="1.1"/></svg>
<span class="t" style="top:316.00px;font-size:12.7px;color:#1a1a1a;letter-spacing:-0.517px;left:532.50px;">Contains:</span>
<div style="left:719px;top:309px;width:543px;height:22.8px;background:#fff;border:1px solid #c9a4d8;"></div>
<div style="left:1282.4px;top:309.6px;width:87px;height:21.8px;background:#fdfdfd;border:1px solid #efefef;border-radius:3px;"></div>
<span class="t" style="top:315.00px;font-size:12.7px;color:#1a1a1a;letter-spacing:-0.715px;left:1312.10px;">Clear</span>
<div style="left:523.5px;top:725.6px;width:855.4px;height:33px;background:linear-gradient(#fcfcfc,#f2f2f2);"></div>
<div style="left:533px;top:341.6px;width:836.4px;height:384px;background:#fff;"></div>
<div style="left:533px;top:341.6px;width:819.6px;height:22.6px;background:#fdfdfd;border-top:1px solid #ebebeb;border-bottom:1px solid #e3e3e3;"></div>
<div style="left:533px;top:342.6px;width:25px;height:21.2px;background:#fff;"></div>
<div style="left:1326.8px;top:342.6px;width:25.8px;height:21.2px;background:#f5f5f5;"></div>
<div style="left:558px;top:341.6px;width:583.6px;height:22.6px;background:#0078D7;"></div>
<span class="t" style="top:348.00px;font-size:12.7px;color:#1a1a1a;letter-spacing:-0.706px;left:533.90px;">Po...</span>
<span class="t" style="top:348.00px;font-size:12.7px;color:#fff;letter-spacing:0.159px;left:558.90px;">Column Title</span>
<span class="t" style="top:348.00px;font-size:12.7px;color:#1a1a1a;letter-spacing:-0.827px;left:1142.70px;">D...</span>
<div style="left:1160.7px;top:343px;width:1px;height:20px;background:#e4e4e4;"></div>
<span class="t" style="top:348.00px;font-size:12.7px;color:#1a1a1a;letter-spacing:-1.192px;left:1162.70px;">S...</span>
<div style="left:1180.7px;top:343px;width:1px;height:20px;background:#e4e4e4;"></div>
<span class="t" style="top:348.00px;font-size:12.7px;color:#1a1a1a;letter-spacing:-0.822px;left:1182.70px;">Fi...</span>
<div style="left:1200.7px;top:343px;width:1px;height:20px;background:#e4e4e4;"></div>
<span class="t" style="top:348.00px;font-size:12.7px;color:#1a1a1a;letter-spacing:-0.746px;left:1202.70px;">Is...</span>
<div style="left:1220.7px;top:343px;width:1px;height:20px;background:#e4e4e4;"></div>
<span class="t" style="top:348.00px;font-size:12.7px;color:#1a1a1a;letter-spacing:-1.200px;left:1222.30px;">E...</span>
<div style="left:1240.7px;top:343px;width:1px;height:20px;background:#e4e4e4;"></div>
<span class="t" style="top:348.00px;font-size:12.7px;color:#1a1a1a;letter-spacing:-0.827px;left:1242.70px;">D...</span>
<div style="left:1260.7px;top:343px;width:1px;height:20px;background:#e4e4e4;"></div>
<span class="t" style="top:348.00px;font-size:12.7px;color:#1a1a1a;letter-spacing:-0.960px;left:1262.30px;">C...</span>
<div style="left:1280.7px;top:343px;width:1px;height:20px;background:#e4e4e4;"></div>
<span class="t" style="top:348.00px;font-size:12.7px;color:#1a1a1a;letter-spacing:-0.796px;left:1282.70px;">Is...</span>
<div style="left:1300.7px;top:343px;width:1px;height:20px;background:#e4e4e4;"></div>
<span class="t" style="top:348.00px;font-size:12.7px;color:#1a1a1a;letter-spacing:-0.856px;left:1302.30px;">Ed...</span>
<div style="left:1325.5px;top:343px;width:1px;height:20px;background:#e4e4e4;"></div>
<div style="left:533px;top:391.24px;width:775.6px;height:1px;background:#fbfbfb;"></div>
<div style="left:1281.8px;top:364.2px;width:19.8px;height:28.04px;background:#dcdcdc;border-top:1px solid rgba(255,255,255,.22);"></div>
<div style="left:1309px;top:364.2px;width:17.8px;height:28.04px;background:linear-gradient(#e9e9e9,#dcdcdc);border-top:1px solid #f4f4f4;"></div>
<svg style="left:1313.6px;top:376.8px" width="7.2" height="2.4" viewBox="0 0 7.2 2.4"><rect x="0" y="0" width="7.2" height="2.2" rx=".9" fill="#151515"/><rect x="2.05" y="0" width=".45" height="2.2" fill="#ccc"/><rect x="4.7" y="0" width=".45" height="2.2" fill="#ccc"/></svg>
<span class="t" style="top:374.00px;font-size:12.7px;color:#1a1a1a;right:952.83px;">1</span>
<svg style="left:561.8px;top:372px" width="9.4" height="10.6" viewBox="0 0 9.4 10.6"><path d="M2.2 5 V3.9 Q2.2 1.5 4.7 1.5 Q7.2 1.5 7.2 3.9 V5" fill="none" stroke="#e8a843" stroke-width="1.9"/><rect x=".3" y="4.6" width="8.8" height="5.8" rx=".5" fill="#e9aa46"/><rect x="4.1" y="6.3" width="1.2" height="2.2" fill="#f6d9a6"/></svg>
<span class="t" style="top:374.00px;font-size:12.7px;color:#1a1a1a;letter-spacing:0.012px;left:575.10px;">Multivalue Explosion Status</span>
<svg style="left:1143.2px;top:372.6px" width="15.6" height="11.2" viewBox="0 0 15.6 11.2"><path d="M.3 5.6 C3 1.2 5.4 .3 7.8 .3 C10.2 .3 12.6 1.2 15.3 5.6 C12.6 10 10.2 10.9 7.8 10.9 C5.4 10.9 3 10 .3 5.6 Z" fill="#2f87cf" stroke="#9fb9cc" stroke-width=".8" stroke-dasharray="1.4 1.1"/><circle cx="7.8" cy="5.6" r="3.9" fill="#fff"/><circle cx="7.8" cy="5.6" r="2.7" fill="#2f87cf"/><circle cx="8.7" cy="4.8" r="1" fill="#cfe6f8"/></svg>
<div style="left:1160px;top:376.6px;width:0.8px;height:4.4px;background:#d39a62;"></div>
<svg style="left:1264.4px;top:371.4px" width="14" height="14" viewBox="0 0 14 14"><path d="M2.1 12 L9 5.2" stroke="#7a7a7a" stroke-width="3.5" stroke-linecap="round"/><circle cx="9.8" cy="4.4" r="4.1" fill="#7a7a7a"/><g transform="rotate(-45 9.8 4.4)"><rect x="9.4" y="3" width="6" height="2.8" fill="#fff"/></g></svg>
<div style="left:1279.9px;top:374.8px;width:0.8px;height:4.4px;background:#d39a62;"></div>
<div style="left:533px;top:392.24px;width:775.6px;height:28.04px;background:#f0f0f0;"></div>
<div style="left:1281.8px;top:392.24px;width:19.8px;height:28.04px;background:#dadada;border-top:1px solid rgba(255,255,255,.22);"></div>
<div style="left:1309px;top:392.24px;width:17.8px;height:28.04px;background:linear-gradient(#e9e9e9,#dcdcdc);border-top:1px solid #f4f4f4;"></div>
<svg style="left:1313.6px;top:404.84px" width="7.2" height="2.4" viewBox="0 0 7.2 2.4"><rect x="0" y="0" width="7.2" height="2.2" rx=".9" fill="#151515"/><rect x="2.05" y="0" width=".45" height="2.2" fill="#ccc"/><rect x="4.7" y="0" width=".45" height="2.2" fill="#ccc"/></svg>
<span class="t" style="top:402.00px;font-size:12.7px;color:#1a1a1a;right:952.83px;">2</span>
<svg style="left:561.8px;top:400.04px" width="9.4" height="10.6" viewBox="0 0 9.4 10.6"><path d="M2.2 5 V3.9 Q2.2 1.5 4.7 1.5 Q7.2 1.5 7.2 3.9 V5" fill="none" stroke="#e8a843" stroke-width="1.9"/><rect x=".3" y="4.6" width="8.8" height="5.8" rx=".5" fill="#e9aa46"/><rect x="4.1" y="6.3" width="1.2" height="2.2" fill="#f6d9a6"/></svg>
<span class="t" style="top:402.00px;font-size:12.7px;color:#1a1a1a;letter-spacing:0.097px;left:575.10px;">Multivalue Explosion Count</span>
<span class="t" style="top:402.00px;font-size:12.7px;color:#1a1a1a;letter-spacing:-0.054px;left:1142.90px;">[vis</span>
<svg style="left:1264.4px;top:399.44px" width="14" height="14" viewBox="0 0 14 14"><path d="M2.1 12 L9 5.2" stroke="#7a7a7a" stroke-width="3.5" stroke-linecap="round"/><circle cx="9.8" cy="4.4" r="4.1" fill="#7a7a7a"/><g transform="rotate(-45 9.8 4.4)"><rect x="9.4" y="3" width="6" height="2.8" fill="#f0f0f0"/></g></svg>
<div style="left:1279.9px;top:402.84px;width:0.8px;height:4.4px;background:#d39a62;"></div>
<div style="left:533px;top:420.28px;width:775.6px;height:28.04px;background:#f0f0f0;"></div>
<div style="left:1281.8px;top:420.28px;width:19.8px;height:28.04px;background:#dadada;border-top:1px solid rgba(255,255,255,.22);"></div>
<div style="left:1309px;top:420.28px;width:17.8px;height:28.04px;background:linear-gradient(#e9e9e9,#dcdcdc);border-top:1px solid #f4f4f4;"></div>
<svg style="left:1313.6px;top:432.88px" width="7.2" height="2.4" viewBox="0 0 7.2 2.4"><rect x="0" y="0" width="7.2" height="2.2" rx=".9" fill="#151515"/><rect x="2.05" y="0" width=".45" height="2.2" fill="#ccc"/><rect x="4.7" y="0" width=".45" height="2.2" fill="#ccc"/></svg>
<span class="t" style="top:430.00px;font-size:12.7px;color:#1a1a1a;right:952.83px;">3</span>
<svg style="left:561.8px;top:428.08px" width="9.4" height="10.6" viewBox="0 0 9.4 10.6"><path d="M2.2 5 V3.9 Q2.2 1.5 4.7 1.5 Q7.2 1.5 7.2 3.9 V5" fill="none" stroke="#e8a843" stroke-width="1.9"/><rect x=".3" y="4.6" width="8.8" height="5.8" rx=".5" fill="#e9aa46"/><rect x="4.1" y="6.3" width="1.2" height="2.2" fill="#f6d9a6"/></svg>
<span class="t" style="top:430.00px;font-size:12.7px;color:#1a1a1a;letter-spacing:0.090px;left:575.10px;">Multivalue Explosion Index</span>
<span class="t" style="top:430.00px;font-size:12.7px;color:#1a1a1a;letter-spacing:-0.054px;left:1142.90px;">[vis</span>
<svg style="left:1264.4px;top:427.48px" width="14" height="14" viewBox="0 0 14 14"><path d="M2.1 12 L9 5.2" stroke="#7a7a7a" stroke-width="3.5" stroke-linecap="round"/><circle cx="9.8" cy="4.4" r="4.1" fill="#7a7a7a"/><g transform="rotate(-45 9.8 4.4)"><rect x="9.4" y="3" width="6" height="2.8" fill="#f0f0f0"/></g></svg>
<div style="left:1279.9px;top:430.88px;width:0.8px;height:4.4px;background:#d39a62;"></div>
<div style="left:533px;top:475.36px;width:775.6px;height:1px;background:#fbfbfb;"></div>
<div style="left:1281.8px;top:448.32px;width:19.8px;height:28.04px;background:#dcdcdc;border-top:1px solid rgba(255,255,255,.22);"></div>
<div style="left:1309px;top:448.32px;width:17.8px;height:28.04px;background:linear-gradient(#e9e9e9,#dcdcdc);border-top:1px solid #f4f4f4;"></div>
<svg style="left:1313.6px;top:460.92px" width="7.2" height="2.4" viewBox="0 0 7.2 2.4"><rect x="0" y="0" width="7.2" height="2.2" rx=".9" fill="#151515"/><rect x="2.05" y="0" width=".45" height="2.2" fill="#ccc"/><rect x="4.7" y="0" width=".45" height="2.2" fill="#ccc"/></svg>
<span class="t" style="top:458.00px;font-size:12.7px;color:#1a1a1a;right:952.83px;">4</span>
<svg style="left:561.8px;top:456.12px" width="9.4" height="10.6" viewBox="0 0 9.4 10.6"><path d="M2.2 5 V3.9 Q2.2 1.5 4.7 1.5 Q7.2 1.5 7.2 3.9 V5" fill="none" stroke="#e8a843" stroke-width="1.9"/><rect x=".3" y="4.6" width="8.8" height="5.8" rx=".5" fill="#e9aa46"/><rect x="4.1" y="6.3" width="1.2" height="2.2" fill="#f6d9a6"/></svg>
<span class="t" style="top:458.00px;font-size:12.7px;color:#1a1a1a;letter-spacing:0.099px;left:575.10px;">Object Type</span>
<svg style="left:1143.2px;top:456.72px" width="15.6" height="11.2" viewBox="0 0 15.6 11.2"><path d="M.3 5.6 C3 1.2 5.4 .3 7.8 .3 C10.2 .3 12.6 1.2 15.3 5.6 C12.6 10 10.2 10.9 7.8 10.9 C5.4 10.9 3 10 .3 5.6 Z" fill="#2f87cf" stroke="#9fb9cc" stroke-width=".8" stroke-dasharray="1.4 1.1"/><circle cx="7.8" cy="5.6" r="3.9" fill="#fff"/><circle cx="7.8" cy="5.6" r="2.7" fill="#2f87cf"/><circle cx="8.7" cy="4.8" r="1" fill="#cfe6f8"/></svg>
<div style="left:1160px;top:460.72px;width:0.8px;height:4.4px;background:#d39a62;"></div>
<div style="left:533px;top:503.4px;width:775.6px;height:1px;background:#fbfbfb;"></div>
<div style="left:1281.8px;top:476.36px;width:19.8px;height:28.04px;background:#dcdcdc;border-top:1px solid rgba(255,255,255,.22);"></div>
<div style="left:1309px;top:476.36px;width:17.8px;height:28.04px;background:linear-gradient(#e9e9e9,#dcdcdc);border-top:1px solid #f4f4f4;"></div>
<svg style="left:1313.6px;top:488.96px" width="7.2" height="2.4" viewBox="0 0 7.2 2.4"><rect x="0" y="0" width="7.2" height="2.2" rx=".9" fill="#151515"/><rect x="2.05" y="0" width=".45" height="2.2" fill="#ccc"/><rect x="4.7" y="0" width=".45" height="2.2" fill="#ccc"/></svg>
<span class="t" style="top:486.00px;font-size:12.7px;color:#1a1a1a;right:952.83px;">5</span>
<svg style="left:561.8px;top:484.16px" width="9.4" height="10.6" viewBox="0 0 9.4 10.6"><path d="M2.2 5 V3.9 Q2.2 1.5 4.7 1.5 Q7.2 1.5 7.2 3.9 V5" fill="none" stroke="#e8a843" stroke-width="1.9"/><rect x=".3" y="4.6" width="8.8" height="5.8" rx=".5" fill="#e9aa46"/><rect x="4.1" y="6.3" width="1.2" height="2.2" fill="#f6d9a6"/></svg>
<span class="t" style="top:486.00px;font-size:12.7px;color:#1a1a1a;letter-spacing:-0.180px;left:575.10px;">Status</span>
<svg style="left:1143.2px;top:484.76px" width="15.6" height="11.2" viewBox="0 0 15.6 11.2"><path d="M.3 5.6 C3 1.2 5.4 .3 7.8 .3 C10.2 .3 12.6 1.2 15.3 5.6 C12.6 10 10.2 10.9 7.8 10.9 C5.4 10.9 3 10 .3 5.6 Z" fill="#2f87cf" stroke="#9fb9cc" stroke-width=".8" stroke-dasharray="1.4 1.1"/><circle cx="7.8" cy="5.6" r="3.9" fill="#fff"/><circle cx="7.8" cy="5.6" r="2.7" fill="#2f87cf"/><circle cx="8.7" cy="4.8" r="1" fill="#cfe6f8"/></svg>
<div style="left:1160px;top:488.76px;width:0.8px;height:4.4px;background:#d39a62;"></div>
<div style="left:533px;top:504.4px;width:775.6px;height:28.04px;background:#ffd7d7;"></div>
<div style="left:1161.6px;top:504.4px;width:1px;height:28.04px;background:#ffe4e4;"></div>
<div style="left:1181.6px;top:504.4px;width:1px;height:28.04px;background:#ffe4e4;"></div>
<div style="left:1201.6px;top:504.4px;width:1px;height:28.04px;background:#ffe4e4;"></div>
<div style="left:1221.6px;top:504.4px;width:1px;height:28.04px;background:#ffe4e4;"></div>
<div style="left:1241.6px;top:504.4px;width:1px;height:28.04px;background:#ffe4e4;"></div>
<div style="left:1261.6px;top:504.4px;width:1px;height:28.04px;background:#ffe4e4;"></div>
<div style="left:1281.6px;top:504.4px;width:1px;height:28.04px;background:#ffe4e4;"></div>
<div style="left:1301.6px;top:504.4px;width:1px;height:28.04px;background:#ffe4e4;"></div>
<div style="left:1281.8px;top:504.4px;width:19.8px;height:28.04px;background:#f3d3d3;border-top:1px solid rgba(255,255,255,.22);"></div>
<div style="left:1309px;top:504.4px;width:17.8px;height:28.04px;background:linear-gradient(#e9e9e9,#dcdcdc);border-top:1px solid #f4f4f4;"></div>
<svg style="left:1313.6px;top:517px" width="7.2" height="2.4" viewBox="0 0 7.2 2.4"><rect x="0" y="0" width="7.2" height="2.2" rx=".9" fill="#151515"/><rect x="2.05" y="0" width=".45" height="2.2" fill="#ccc"/><rect x="4.7" y="0" width=".45" height="2.2" fill="#ccc"/></svg>
<span class="t" style="top:514.00px;font-size:12.7px;color:#1a1a1a;right:952.83px;">6</span>
<span class="t" style="top:514.00px;font-size:12.7px;color:#1a1a1a;letter-spacing:0.171px;left:558.70px;">Load status - Additional Info last queried on</span>
<div style="left:533px;top:559.48px;width:775.6px;height:1px;background:#fbfbfb;"></div>
<div style="left:1281.8px;top:532.44px;width:19.8px;height:28.04px;background:#dcdcdc;border-top:1px solid rgba(255,255,255,.22);"></div>
<div style="left:1309px;top:532.44px;width:17.8px;height:28.04px;background:linear-gradient(#e9e9e9,#dcdcdc);border-top:1px solid #f4f4f4;"></div>
<svg style="left:1313.6px;top:545.04px" width="7.2" height="2.4" viewBox="0 0 7.2 2.4"><rect x="0" y="0" width="7.2" height="2.2" rx=".9" fill="#151515"/><rect x="2.05" y="0" width=".45" height="2.2" fill="#ccc"/><rect x="4.7" y="0" width=".45" height="2.2" fill="#ccc"/></svg>
<span class="t" style="top:542.00px;font-size:12.7px;color:#1a1a1a;right:952.83px;">7</span>
<span class="t" style="top:542.00px;font-size:12.7px;color:#1a1a1a;letter-spacing:-0.055px;left:558.70px;">Display name</span>
<svg style="left:1143.2px;top:540.84px" width="15.6" height="11.2" viewBox="0 0 15.6 11.2"><path d="M.3 5.6 C3 1.2 5.4 .3 7.8 .3 C10.2 .3 12.6 1.2 15.3 5.6 C12.6 10 10.2 10.9 7.8 10.9 C5.4 10.9 3 10 .3 5.6 Z" fill="#2f87cf" stroke="#9fb9cc" stroke-width=".8" stroke-dasharray="1.4 1.1"/><circle cx="7.8" cy="5.6" r="3.9" fill="#fff"/><circle cx="7.8" cy="5.6" r="2.7" fill="#2f87cf"/><circle cx="8.7" cy="4.8" r="1" fill="#cfe6f8"/></svg>
<div style="left:1160px;top:544.84px;width:0.8px;height:4.4px;background:#d39a62;"></div>
<svg style="left:1203px;top:539.04px" width="16" height="14.4" viewBox="0 0 16 14.4"><path d="M2 8 L5.8 11.8 L13.8 3" fill="none" stroke="#c9cfcb" stroke-width="5" stroke-linejoin="round" stroke-linecap="round" stroke-dasharray="1.2 .8"/><path d="M2 8 L5.8 11.8 L13.8 3" fill="none" stroke="#f4f6f5" stroke-width="4.2" stroke-linejoin="round" stroke-linecap="round"/><path d="M1.8 7.8 L5.8 11.8 L14 2.8" fill="none" stroke="#22a06b" stroke-width="3.1"/></svg>
<div style="left:1219.9px;top:544.84px;width:0.8px;height:4.4px;background:#d39a62;"></div>
<div style="left:533px;top:587.52px;width:775.6px;height:1px;background:#fbfbfb;"></div>
<div style="left:1281.8px;top:560.48px;width:19.8px;height:28.04px;background:#dcdcdc;border-top:1px solid rgba(255,255,255,.22);"></div>
<div style="left:1309px;top:560.48px;width:17.8px;height:28.04px;background:linear-gradient(#e9e9e9,#dcdcdc);border-top:1px solid #f4f4f4;"></div>
<svg style="left:1313.6px;top:573.08px" width="7.2" height="2.4" viewBox="0 0 7.2 2.4"><rect x="0" y="0" width="7.2" height="2.2" rx=".9" fill="#151515"/><rect x="2.05" y="0" width=".45" height="2.2" fill="#ccc"/><rect x="4.7" y="0" width=".45" height="2.2" fill="#ccc"/></svg>
<span class="t" style="top:570.00px;font-size:12.7px;color:#1a1a1a;right:952.83px;">8</span>
<span class="t" style="top:570.00px;font-size:12.7px;color:#1a1a1a;letter-spacing:0.090px;left:558.70px;">Microsoft Azure portal URL</span>
<svg style="left:1143.2px;top:568.88px" width="15.6" height="11.2" viewBox="0 0 15.6 11.2"><path d="M.3 5.6 C3 1.2 5.4 .3 7.8 .3 C10.2 .3 12.6 1.2 15.3 5.6 C12.6 10 10.2 10.9 7.8 10.9 C5.4 10.9 3 10 .3 5.6 Z" fill="#2f87cf" stroke="#9fb9cc" stroke-width=".8" stroke-dasharray="1.4 1.1"/><circle cx="7.8" cy="5.6" r="3.9" fill="#fff"/><circle cx="7.8" cy="5.6" r="2.7" fill="#2f87cf"/><circle cx="8.7" cy="4.8" r="1" fill="#cfe6f8"/></svg>
<div style="left:1160px;top:572.88px;width:0.8px;height:4.4px;background:#d39a62;"></div>
<div style="left:533px;top:588.52px;width:775.6px;height:28.04px;background:#0078D7;"></div>
<div style="left:1161.6px;top:588.52px;width:1px;height:28.04px;background:#4a9be3;"></div>
<div style="left:1181.6px;top:588.52px;width:1px;height:28.04px;background:#4a9be3;"></div>
<div style="left:1201.6px;top:588.52px;width:1px;height:28.04px;background:#4a9be3;"></div>
<div style="left:1221.6px;top:588.52px;width:1px;height:28.04px;background:#4a9be3;"></div>
<div style="left:1241.6px;top:588.52px;width:1px;height:28.04px;background:#4a9be3;"></div>
<div style="left:1261.6px;top:588.52px;width:1px;height:28.04px;background:#4a9be3;"></div>
<div style="left:1281.6px;top:588.52px;width:1px;height:28.04px;background:#4a9be3;"></div>
<div style="left:1301.6px;top:588.52px;width:1px;height:28.04px;background:#4a9be3;"></div>
<div style="left:1281.8px;top:588.52px;width:19.8px;height:28.04px;background:#6aa6dc;border-top:1px solid rgba(255,255,255,.22);"></div>
<div style="left:1309px;top:588.52px;width:17.8px;height:28.04px;background:linear-gradient(#e9e9e9,#dcdcdc);border-top:1px solid #f4f4f4;"></div>
<svg style="left:1313.6px;top:601.12px" width="7.2" height="2.4" viewBox="0 0 7.2 2.4"><rect x="0" y="0" width="7.2" height="2.2" rx=".9" fill="#151515"/><rect x="2.05" y="0" width=".45" height="2.2" fill="#ccc"/><rect x="4.7" y="0" width=".45" height="2.2" fill="#ccc"/></svg>
<span class="t" style="top:598.00px;font-size:12.7px;color:#fff;right:952.83px;">9</span>
<span class="t" style="top:598.00px;font-size:12.7px;color:#fff;letter-spacing:0.199px;left:559.10px;">Application ID</span>
<svg style="left:1143.2px;top:596.92px" width="15.6" height="11.2" viewBox="0 0 15.6 11.2"><path d="M.3 5.6 C3 1.2 5.4 .3 7.8 .3 C10.2 .3 12.6 1.2 15.3 5.6 C12.6 10 10.2 10.9 7.8 10.9 C5.4 10.9 3 10 .3 5.6 Z" fill="#0f74c8" stroke="#fff" stroke-width="1.1"/><circle cx="7.8" cy="5.6" r="3.2" fill="none" stroke="#fff" stroke-width="1.1"/><circle cx="7.8" cy="5.6" r="1.1" fill="#fff"/></svg>
<svg style="left:1203px;top:595.12px" width="16" height="14.4" viewBox="0 0 16 14.4"><path d="M2 8 L5.8 11.8 L13.8 3" fill="none" stroke="#c9cfcb" stroke-width="5" stroke-linejoin="round" stroke-linecap="round" stroke-dasharray="1.2 .8"/><path d="M2 8 L5.8 11.8 L13.8 3" fill="none" stroke="#f4f6f5" stroke-width="4.2" stroke-linejoin="round" stroke-linecap="round"/><path d="M1.8 7.8 L5.8 11.8 L14 2.8" fill="none" stroke="#22a06b" stroke-width="3.1"/></svg>
<div style="left:533px;top:643.6px;width:775.6px;height:1px;background:#fbfbfb;"></div>
<div style="left:1281.8px;top:616.56px;width:19.8px;height:28.04px;background:#dcdcdc;border-top:1px solid rgba(255,255,255,.22);"></div>
<div style="left:1309px;top:616.56px;width:17.8px;height:28.04px;background:linear-gradient(#e9e9e9,#dcdcdc);border-top:1px solid #f4f4f4;"></div>
<svg style="left:1313.6px;top:629.16px" width="7.2" height="2.4" viewBox="0 0 7.2 2.4"><rect x="0" y="0" width="7.2" height="2.2" rx=".9" fill="#151515"/><rect x="2.05" y="0" width=".45" height="2.2" fill="#ccc"/><rect x="4.7" y="0" width=".45" height="2.2" fill="#ccc"/></svg>
<span class="t" style="top:626.00px;font-size:12.7px;color:#1a1a1a;right:952.83px;">10</span>
<span class="t" style="top:626.00px;font-size:12.7px;color:#1a1a1a;letter-spacing:-0.012px;left:558.70px;">Disabled By Microsoft Status</span>
<svg style="left:1143.2px;top:624.96px" width="15.6" height="11.2" viewBox="0 0 15.6 11.2"><path d="M.3 5.6 C3 1.2 5.4 .3 7.8 .3 C10.2 .3 12.6 1.2 15.3 5.6 C12.6 10 10.2 10.9 7.8 10.9 C5.4 10.9 3 10 .3 5.6 Z" fill="#2f87cf" stroke="#9fb9cc" stroke-width=".8" stroke-dasharray="1.4 1.1"/><circle cx="7.8" cy="5.6" r="3.9" fill="#fff"/><circle cx="7.8" cy="5.6" r="2.7" fill="#2f87cf"/><circle cx="8.7" cy="4.8" r="1" fill="#cfe6f8"/></svg>
<div style="left:1160px;top:628.96px;width:0.8px;height:4.4px;background:#d39a62;"></div>
<svg style="left:1203px;top:623.16px" width="16" height="14.4" viewBox="0 0 16 14.4"><path d="M2 8 L5.8 11.8 L13.8 3" fill="none" stroke="#c9cfcb" stroke-width="5" stroke-linejoin="round" stroke-linecap="round" stroke-dasharray="1.2 .8"/><path d="M2 8 L5.8 11.8 L13.8 3" fill="none" stroke="#f4f6f5" stroke-width="4.2" stroke-linejoin="round" stroke-linecap="round"/><path d="M1.8 7.8 L5.8 11.8 L14 2.8" fill="none" stroke="#22a06b" stroke-width="3.1"/></svg>
<div style="left:1219.9px;top:628.96px;width:0.8px;height:4.4px;background:#d39a62;"></div>
<div style="left:533px;top:671.64px;width:775.6px;height:1px;background:#fbfbfb;"></div>
<div style="left:1281.8px;top:644.6px;width:19.8px;height:28.04px;background:#dcdcdc;border-top:1px solid rgba(255,255,255,.22);"></div>
<div style="left:1309px;top:644.6px;width:17.8px;height:28.04px;background:linear-gradient(#e9e9e9,#dcdcdc);border-top:1px solid #f4f4f4;"></div>
<svg style="left:1313.6px;top:657.2px" width="7.2" height="2.4" viewBox="0 0 7.2 2.4"><rect x="0" y="0" width="7.2" height="2.2" rx=".9" fill="#151515"/><rect x="2.05" y="0" width=".45" height="2.2" fill="#ccc"/><rect x="4.7" y="0" width=".45" height="2.2" fill="#ccc"/></svg>
<span class="t" style="top:654.00px;font-size:12.7px;color:#1a1a1a;right:952.83px;">11</span>
<span class="t" style="top:654.00px;font-size:12.7px;color:#1a1a1a;letter-spacing:0.101px;left:558.70px;">Created date time</span>
<svg style="left:1143.2px;top:653px" width="15.6" height="11.2" viewBox="0 0 15.6 11.2"><path d="M.3 5.6 C3 1.2 5.4 .3 7.8 .3 C10.2 .3 12.6 1.2 15.3 5.6 C12.6 10 10.2 10.9 7.8 10.9 C5.4 10.9 3 10 .3 5.6 Z" fill="#2f87cf" stroke="#9fb9cc" stroke-width=".8" stroke-dasharray="1.4 1.1"/><circle cx="7.8" cy="5.6" r="3.9" fill="#fff"/><circle cx="7.8" cy="5.6" r="2.7" fill="#2f87cf"/><circle cx="8.7" cy="4.8" r="1" fill="#cfe6f8"/></svg>
<div style="left:1160px;top:657px;width:0.8px;height:4.4px;background:#d39a62;"></div>
<svg style="left:1203px;top:651.2px" width="16" height="14.4" viewBox="0 0 16 14.4"><path d="M2 8 L5.8 11.8 L13.8 3" fill="none" stroke="#c9cfcb" stroke-width="5" stroke-linejoin="round" stroke-linecap="round" stroke-dasharray="1.2 .8"/><path d="M2 8 L5.8 11.8 L13.8 3" fill="none" stroke="#f4f6f5" stroke-width="4.2" stroke-linejoin="round" stroke-linecap="round"/><path d="M1.8 7.8 L5.8 11.8 L14 2.8" fill="none" stroke="#22a06b" stroke-width="3.1"/></svg>
<div style="left:1219.9px;top:657px;width:0.8px;height:4.4px;background:#d39a62;"></div>
<div style="left:533px;top:699.68px;width:775.6px;height:1px;background:#fbfbfb;"></div>
<div style="left:1281.8px;top:672.64px;width:19.8px;height:28.04px;background:#dcdcdc;border-top:1px solid rgba(255,255,255,.22);"></div>
<div style="left:1309px;top:672.64px;width:17.8px;height:28.04px;background:linear-gradient(#e9e9e9,#dcdcdc);border-top:1px solid #f4f4f4;"></div>
<svg style="left:1313.6px;top:685.24px" width="7.2" height="2.4" viewBox="0 0 7.2 2.4"><rect x="0" y="0" width="7.2" height="2.2" rx=".9" fill="#151515"/><rect x="2.05" y="0" width=".45" height="2.2" fill="#ccc"/><rect x="4.7" y="0" width=".45" height="2.2" fill="#ccc"/></svg>
<span class="t" style="top:682.00px;font-size:12.7px;color:#1a1a1a;right:952.83px;">12</span>
<span class="t" style="top:682.00px;font-size:12.7px;color:#1a1a1a;letter-spacing:-0.514px;left:558.70px;">Tags</span>
<svg style="left:1143.2px;top:681.04px" width="15.6" height="11.2" viewBox="0 0 15.6 11.2"><path d="M.3 5.6 C3 1.2 5.4 .3 7.8 .3 C10.2 .3 12.6 1.2 15.3 5.6 C12.6 10 10.2 10.9 7.8 10.9 C5.4 10.9 3 10 .3 5.6 Z" fill="#2f87cf" stroke="#9fb9cc" stroke-width=".8" stroke-dasharray="1.4 1.1"/><circle cx="7.8" cy="5.6" r="3.9" fill="#fff"/><circle cx="7.8" cy="5.6" r="2.7" fill="#2f87cf"/><circle cx="8.7" cy="4.8" r="1" fill="#cfe6f8"/></svg>
<div style="left:1160px;top:685.04px;width:0.8px;height:4.4px;background:#d39a62;"></div>
<svg style="left:1203px;top:679.24px" width="16" height="14.4" viewBox="0 0 16 14.4"><path d="M2 8 L5.8 11.8 L13.8 3" fill="none" stroke="#c9cfcb" stroke-width="5" stroke-linejoin="round" stroke-linecap="round" stroke-dasharray="1.2 .8"/><path d="M2 8 L5.8 11.8 L13.8 3" fill="none" stroke="#f4f6f5" stroke-width="4.2" stroke-linejoin="round" stroke-linecap="round"/><path d="M1.8 7.8 L5.8 11.8 L14 2.8" fill="none" stroke="#22a06b" stroke-width="3.1"/></svg>
<div style="left:1219.9px;top:685.04px;width:0.8px;height:4.4px;background:#d39a62;"></div>
<div style="left:533px;top:724.6px;width:775.6px;height:1px;background:#fbfbfb;"></div>
<div style="left:1281.8px;top:700.68px;width:19.8px;height:24.92px;background:#dcdcdc;border-top:1px solid rgba(255,255,255,.22);"></div>
<div style="left:1309px;top:700.68px;width:17.8px;height:24.92px;background:linear-gradient(#e9e9e9,#dcdcdc);border-top:1px solid #f4f4f4;"></div>
<svg style="left:1313.6px;top:713.28px" width="7.2" height="2.4" viewBox="0 0 7.2 2.4"><rect x="0" y="0" width="7.2" height="2.2" rx=".9" fill="#151515"/><rect x="2.05" y="0" width=".45" height="2.2" fill="#ccc"/><rect x="4.7" y="0" width=".45" height="2.2" fill="#ccc"/></svg>
<span class="t" style="top:710.00px;font-size:12.7px;color:#1a1a1a;right:952.83px;">13</span>
<span class="t" style="top:710.00px;font-size:12.7px;color:#1a1a1a;left:558.70px;">Sign in audience</span>
<svg style="left:1143.2px;top:709.08px" width="15.6" height="11.2" viewBox="0 0 15.6 11.2"><path d="M.3 5.6 C3 1.2 5.4 .3 7.8 .3 C10.2 .3 12.6 1.2 15.3 5.6 C12.6 10 10.2 10.9 7.8 10.9 C5.4 10.9 3 10 .3 5.6 Z" fill="#2f87cf" stroke="#9fb9cc" stroke-width=".8" stroke-dasharray="1.4 1.1"/><circle cx="7.8" cy="5.6" r="3.9" fill="#fff"/><circle cx="7.8" cy="5.6" r="2.7" fill="#2f87cf"/><circle cx="8.7" cy="4.8" r="1" fill="#cfe6f8"/></svg>
<div style="left:1160px;top:713.08px;width:0.8px;height:4.4px;background:#d39a62;"></div>
<svg style="left:1203px;top:707.28px" width="16" height="14.4" viewBox="0 0 16 14.4"><path d="M2 8 L5.8 11.8 L13.8 3" fill="none" stroke="#c9cfcb" stroke-width="5" stroke-linejoin="round" stroke-linecap="round" stroke-dasharray="1.2 .8"/><path d="M2 8 L5.8 11.8 L13.8 3" fill="none" stroke="#f4f6f5" stroke-width="4.2" stroke-linejoin="round" stroke-linecap="round"/><path d="M1.8 7.8 L5.8 11.8 L14 2.8" fill="none" stroke="#22a06b" stroke-width="3.1"/></svg>
<div style="left:1219.9px;top:713.08px;width:0.8px;height:4.4px;background:#d39a62;"></div>
<div style="left:557.6px;top:364px;width:1.4px;height:361.6px;background:#1f86e0;"></div>
<div style="left:1139.7px;top:364px;width:1.4px;height:361.6px;background:#2b8de3;"></div>
<div style="left:1352.6px;top:341.6px;width:16.8px;height:384px;background:linear-gradient(90deg,#f5f5f5,#fbfbfb);"></div>
<svg style="left:1356px;top:348px" width="9.4" height="5" viewBox="0 0 9.4 5"><path d="M0 5 L4.7 0 L9.4 5 Z" fill="#3f4a7a"/></svg>
<svg style="left:1356px;top:714.2px" width="9.4" height="5" viewBox="0 0 9.4 5"><path d="M0 0 L9.4 0 L4.7 5 Z" fill="#3f4a7a"/></svg>
<div style="left:1352.8px;top:359px;width:16.4px;height:40.4px;background:#8c8c8c;"></div>
<span class="t" style="top:730.00px;font-size:12.7px;color:#1a1a1a;letter-spacing:-0.174px;left:534.90px;">Rows Loaded: 103 | Rows Displayed: 103 | Rows Selected: 1</span>
<div style="left:534px;top:757.9px;width:222.6px;height:20.8px;background:#fafafa;border:1px solid #f9f9f9;border-radius:3px;"></div>
<div style="left:761.4px;top:757.9px;width:223.6px;height:20.8px;background:#fafafa;border:1px solid #f9f9f9;border-radius:3px;"></div>
<div style="left:1093.4px;top:757.9px;width:275.6px;height:20.8px;background:#fdfdfd;border:1px solid #fbfbfb;border-radius:3px;"></div>
<span class="t" style="top:764.00px;font-size:12.4px;color:#7a7a7a;letter-spacing:-0.145px;left:593.52px;">Hide All Comments</span>
<span class="t" style="top:764.00px;font-size:12.4px;color:#7a7a7a;letter-spacing:-0.165px;left:818.92px;">Show All Comments</span>
<span class="t" style="top:764.00px;font-size:12.5px;color:#1a1a1a;letter-spacing:-0.340px;left:1142.91px;">Show selected and close map</span>
<div style="left:1350.9px;top:761.2px;width:1px;height:14.8px;background:#777;"></div>
<svg style="left:1356.1px;top:767px" width="7.9" height="4.2" viewBox="0 0 7.9 4.2"><path d="M0 0 L7.9 0 L3.95 4.2 Z" fill="#111"/></svg>
</section>
</div>
</body></html>
